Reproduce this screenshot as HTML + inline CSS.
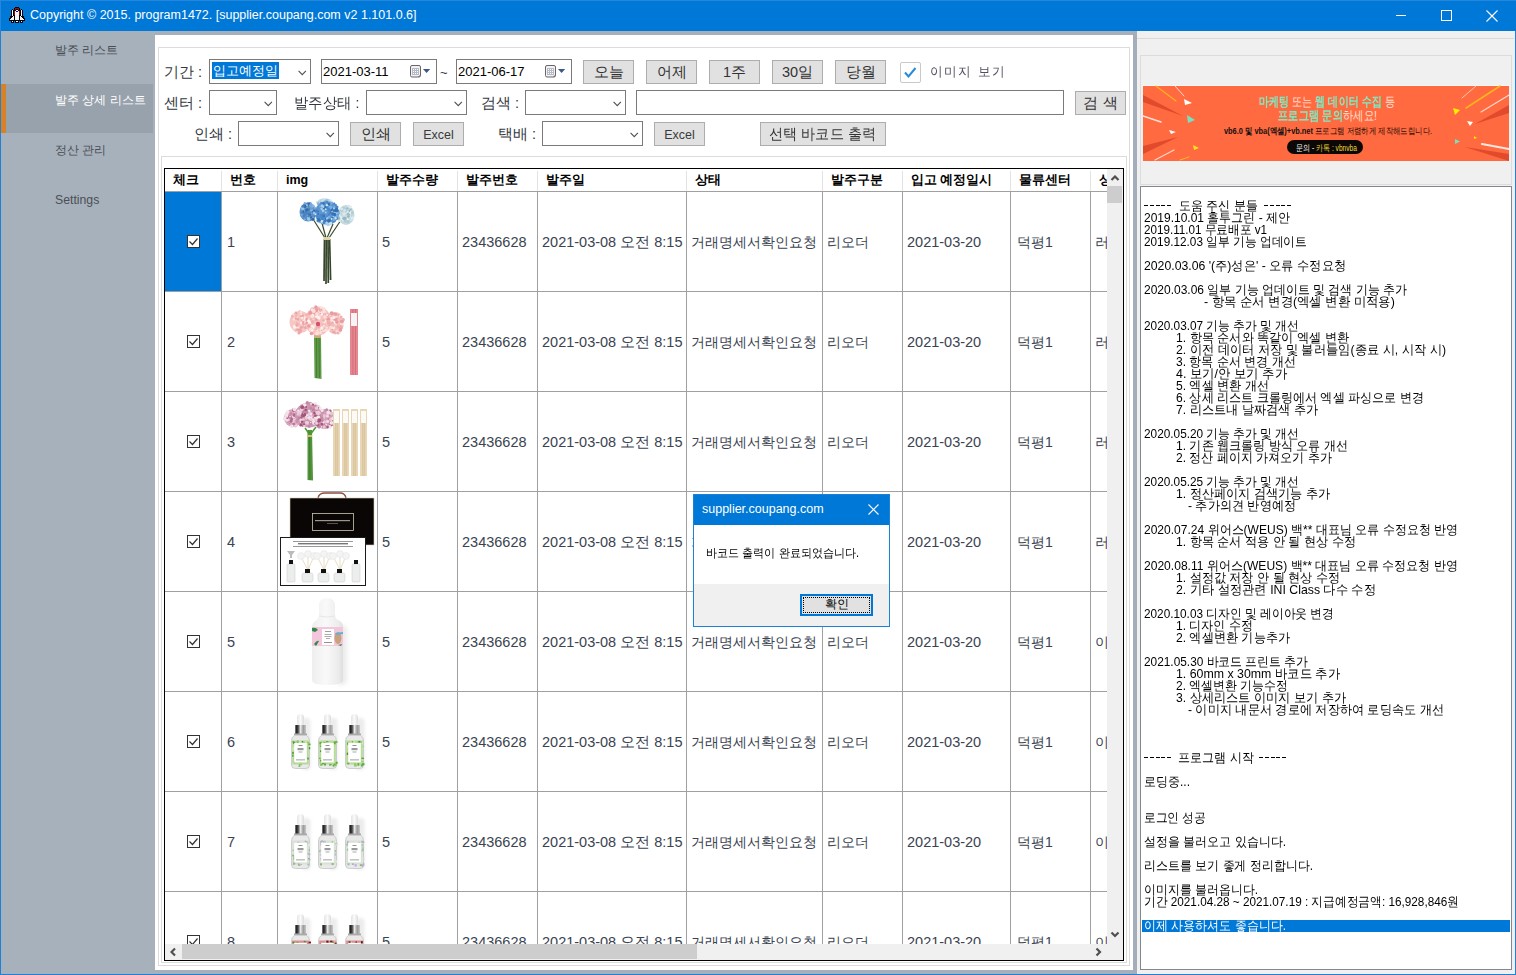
<!DOCTYPE html>
<html><head><meta charset="utf-8">
<style>
*{margin:0;padding:0;box-sizing:border-box}
html,body{width:1516px;height:975px;overflow:hidden;background:#a6b0bb;font-family:"Liberation Sans",sans-serif}
.a{position:absolute}
#title{left:0;top:0;width:1516px;height:31px;background:#0078d7}
#title .t{left:30px;top:8px;color:#fff;font-size:12.5px;white-space:nowrap}
#bl{left:0;top:31px;width:1px;height:944px;background:#1f80d6}
#br{left:1515px;top:31px;width:1px;height:944px;background:#1f80d6}
#bb{left:0;top:974px;width:1516px;height:1px;background:#1f80d6}
#side{left:1px;top:31px;width:154px;height:943px;background:#a7b1bc}
.nav{left:55px;color:#4a4f55;font-size:12.25px;white-space:nowrap}
#sel{left:1px;top:84px;width:152px;height:49px;background:#98a2ac}
#selbar{left:1px;top:84px;width:5px;height:49px;background:#d98126}
#main{left:155px;top:35px;width:978px;height:935px;background:#fff}
#split{left:1133px;top:31px;width:4px;height:943px;background:#a3aeba}
#right{left:1137px;top:31px;width:378px;height:943px;background:#f0f0f0}
.gb{border:1px solid #dcdcdc}
.lbl{color:#343840;font-size:14.5px;line-height:16px;white-space:nowrap}
.cb{background:#fff;border:1px solid #7a7a7a}
.chev{position:absolute;width:7px;height:7px;border-right:1px solid #444;border-bottom:1px solid #444;transform:rotate(45deg)}
.btn{background:#e1e1e1;border:1px solid #adadad;color:#333;font-size:14.5px;text-align:center;white-space:nowrap;line-height:22px}
.th{color:#000;font-size:12.5px;font-weight:bold;white-space:nowrap;line-height:16px}
.td{color:#3b4351;font-size:14.5px;white-space:nowrap;line-height:18px}
.log{font-size:13px;line-height:12px;white-space:pre;transform-origin:0 0}
.dlgt{color:#000;font-size:12px;line-height:14px;white-space:nowrap}
span.k{display:inline-block;transform-origin:0 50%}
.btn span.k{transform-origin:50% 50%}
.txt{color:#000;font-size:13px;white-space:nowrap}
</style></head><body>
<svg width="0" height="0" style="position:absolute"><defs><filter id="SHB" x="-60%" y="-20%" width="220%" height="140%"><feGaussianBlur stdDeviation="1.8"/></filter></defs></svg>
<!-- title bar -->
<div id="title" class="a">
  <svg class="a" style="left:8px;top:6px" width="18" height="18" viewBox="0 0 18 18" shape-rendering="crispEdges">
    <g fill="#000"><rect x="7" y="1" width="4" height="1"/><rect x="6" y="2" width="6" height="12"/><rect x="4" y="3" width="1" height="1"/><rect x="13" y="3" width="1" height="1"/><rect x="3" y="4" width="3" height="6"/><rect x="12" y="4" width="3" height="6"/><path d="M3 9H6V14H1V13Z"/><path d="M12 9H15L17 13V14H12Z"/><rect x="1" y="14" width="16" height="1"/><rect x="3" y="15" width="3" height="2"/><rect x="7" y="15" width="4" height="2"/><rect x="12" y="15" width="3" height="2"/></g>
    <g fill="#9b0a0a"><rect x="7" y="2" width="4" height="1"/><rect x="7" y="3" width="1" height="1"/><rect x="10" y="3" width="1" height="1"/><rect x="6" y="5" width="1" height="4"/><rect x="11" y="5" width="1" height="4"/></g>
    <g fill="#f4f4f4"><rect x="8" y="4" width="2" height="1"/><rect x="7" y="5" width="4" height="7"/><rect x="7" y="12" width="1" height="1"/><rect x="10" y="12" width="1" height="1"/><rect x="8" y="12" width="2" height="1" fill="#ddd"/><rect x="4" y="4" width="1" height="6"/><rect x="13" y="4" width="1" height="6"/><path d="M5 10H6V14H1.5Z"/><path d="M12 10H13L16.5 14H12Z"/><rect x="7" y="12" width="4" height="2"/><rect x="4" y="15" width="1" height="1"/><rect x="8" y="15" width="2" height="1"/><rect x="13" y="15" width="1" height="1"/></g>
    <rect x="8" y="5" width="2" height="1" fill="#0000d0"/>
  </svg>
  <div class="a t">Copyright © 2015. program1472. [supplier.coupang.com v2 1.101.0.6]</div>
  <div class="a" style="left:1396px;top:15px;width:10px;height:1px;background:#fff"></div>
  <div class="a" style="left:1441px;top:10px;width:11px;height:11px;border:1px solid #fff"></div>
  <svg class="a" style="left:1486px;top:10px" width="12" height="12" viewBox="0 0 12 12"><path d="M0.5 0.5L11.5 11.5M11.5 0.5L0.5 11.5" stroke="#fff" stroke-width="1.1"/></svg>
</div>
<div class="a" style="left:0;top:0;width:1516px;height:1px;background:#2487dc"></div><div class="a" style="left:0;top:0;width:1px;height:31px;background:#2487dc"></div><div id="bl" class="a"></div><div id="br" class="a"></div><div id="bb" class="a"></div>
<!-- sidebar -->
<div id="side" class="a"></div>
<div id="sel" class="a"></div><div id="selbar" class="a"></div>
<div class="a nav" style="top:42px"><span class="k" style="--tw:63.41px">발주 리스트</span></div>
<div class="a nav" style="top:92px;color:#fff"><span class="k" style="--tw:90.81px">발주 상세 리스트</span></div>
<div class="a nav" style="top:142px"><span class="k" style="--tw:51.41px">정산 관리</span></div>
<div class="a nav" style="top:193px">Settings</div>
<div id="main" class="a"></div>
<div id="split" class="a"></div>
<div id="right" class="a"></div>

<!-- MAIN CONTENT -->
<div id="content">
<div class="a gb" style="left:158px;top:47px;width:972px;height:919px"></div>
<div class="a gb" style="left:161px;top:156px;width:966px;height:807px"></div>
<div class="a lbl" style="left:164px;top:64px;"><span class="k" style="--tw:38.06px">기간 :</span></div>
<div class="a cb" style="left:209px;top:59px;width:102px;height:25px"><div class="a" style="left:2px;top:2px;width:67px;height:17px;background:#0078d7;color:#fff;font-size:13px;line-height:17px;padding-left:1px"><span class="k" style="--tw:65.00px">입고예정일</span></div><svg class="a" style="left:88px;top:9.5px" width="9" height="6" viewBox="0 0 9 6"><path d="M0.6 0.8L4.25 4.6L7.9 0.8" fill="none" stroke="#505050" stroke-width="1.1"/></svg></div>
<div class="a cb" style="left:321px;top:59px;width:116px;height:25px"><div class="a txt" style="left:1px;top:4px">2021-03-11</div><svg class="a" style="left:87px;top:5px" width="24" height="14" viewBox="0 0 24 14"><rect x="1.5" y="0.5" width="10" height="11.5" rx="1.5" fill="#eef2fa" stroke="#6f6462" stroke-width="1"/><rect x="3" y="3" width="7" height="7" fill="#b6bac4" shape-rendering="crispEdges"/><g fill="#fff" shape-rendering="crispEdges"><rect x="4" y="4" width="1" height="1"/><rect x="6" y="4" width="1" height="1"/><rect x="8" y="4" width="1" height="1"/><rect x="4" y="6" width="1" height="1"/><rect x="6" y="6" width="1" height="1"/><rect x="8" y="6" width="1" height="1"/><rect x="4" y="8" width="1" height="1"/><rect x="6" y="8" width="1" height="1"/><rect x="8" y="8" width="1" height="1"/></g><path d="M9 12L11.5 9.5V10.5L10 12Z" fill="#6f6462"/><path d="M14 3.9H21.2L17.6 8Z" fill="#3b5888"/></svg></div>
<div class="a cb" style="left:456px;top:59px;width:116px;height:25px"><div class="a txt" style="left:1px;top:4px">2021-06-17</div><svg class="a" style="left:87px;top:5px" width="24" height="14" viewBox="0 0 24 14"><rect x="1.5" y="0.5" width="10" height="11.5" rx="1.5" fill="#eef2fa" stroke="#6f6462" stroke-width="1"/><rect x="3" y="3" width="7" height="7" fill="#b6bac4" shape-rendering="crispEdges"/><g fill="#fff" shape-rendering="crispEdges"><rect x="4" y="4" width="1" height="1"/><rect x="6" y="4" width="1" height="1"/><rect x="8" y="4" width="1" height="1"/><rect x="4" y="6" width="1" height="1"/><rect x="6" y="6" width="1" height="1"/><rect x="8" y="6" width="1" height="1"/><rect x="4" y="8" width="1" height="1"/><rect x="6" y="8" width="1" height="1"/><rect x="8" y="8" width="1" height="1"/></g><path d="M9 12L11.5 9.5V10.5L10 12Z" fill="#6f6462"/><path d="M14 3.9H21.2L17.6 8Z" fill="#3b5888"/></svg></div>
<div class="a lbl" style="left:440px;top:65px;font-size:13px">~</div>
<div class="a btn" style="left:583px;top:60px;width:51px;height:24px"><span class="k" style="--tw:30.00px">오늘</span></div>
<div class="a btn" style="left:646px;top:60px;width:51px;height:24px"><span class="k" style="--tw:30.00px">어제</span></div>
<div class="a btn" style="left:709px;top:60px;width:51px;height:24px"><span class="k" style="--tw:23.08px">1주</span></div>
<div class="a btn" style="left:772px;top:60px;width:51px;height:24px"><span class="k" style="--tw:31.14px">30일</span></div>
<div class="a btn" style="left:835px;top:60px;width:51px;height:24px"><span class="k" style="--tw:30.00px">당월</span></div>
<div class="a" style="left:900px;top:62px;width:21px;height:21px;border:1px solid #c9c9c9;border-radius:2px;background:#fff"></div>
<svg class="a" style="left:900px;top:62px" width="21" height="21" viewBox="0 0 21 21"><path d="M5 10.5l3.5 4L15.5 6" fill="none" stroke="#2a8ad6" stroke-width="2"/></svg>
<div class="a lbl" style="left:930px;top:64px;letter-spacing:1.6px;color:#505060;font-size:13px"><span class="k" style="--tw:76px">이미지 보기</span></div>
<div class="a lbl" style="left:164px;top:95px;"><span class="k" style="--tw:38.06px">센터 :</span></div>
<div class="a cb" style="left:209px;top:90px;width:68px;height:25px"><svg class="a" style="left:54px;top:9.5px" width="9" height="6" viewBox="0 0 9 6"><path d="M0.6 0.8L4.25 4.6L7.9 0.8" fill="none" stroke="#505050" stroke-width="1.1"/></svg></div>
<div class="a lbl" style="left:294px;top:95px;"><span class="k" style="--tw:65.40px">발주상태 :</span></div>
<div class="a cb" style="left:366px;top:90px;width:101px;height:25px"><svg class="a" style="left:87px;top:9.5px" width="9" height="6" viewBox="0 0 9 6"><path d="M0.6 0.8L4.25 4.6L7.9 0.8" fill="none" stroke="#505050" stroke-width="1.1"/></svg></div>
<div class="a lbl" style="left:481px;top:95px;"><span class="k" style="--tw:38.06px">검색 :</span></div>
<div class="a cb" style="left:525px;top:90px;width:101px;height:25px"><svg class="a" style="left:87px;top:9.5px" width="9" height="6" viewBox="0 0 9 6"><path d="M0.6 0.8L4.25 4.6L7.9 0.8" fill="none" stroke="#505050" stroke-width="1.1"/></svg></div>
<div class="a cb" style="left:636px;top:90px;width:428px;height:25px"></div>
<div class="a btn" style="left:1075px;top:91px;width:51px;height:24px"><span class="k" style="--tw:34.03px">검 색</span></div>
<div class="a lbl" style="left:194px;top:126px;"><span class="k" style="--tw:38.06px">인쇄 :</span></div>
<div class="a cb" style="left:238px;top:121px;width:101px;height:25px"><svg class="a" style="left:87px;top:9.5px" width="9" height="6" viewBox="0 0 9 6"><path d="M0.6 0.8L4.25 4.6L7.9 0.8" fill="none" stroke="#505050" stroke-width="1.1"/></svg></div>
<div class="a btn" style="left:350px;top:122px;width:51px;height:24px"><span class="k" style="--tw:30.00px">인쇄</span></div>
<div class="a btn" style="left:413px;top:122px;width:51px;height:24px;font-size:12.5px;color:#3a3a3a;line-height:24px">Excel</div>
<div class="a lbl" style="left:498px;top:126px;"><span class="k" style="--tw:38.06px">택배 :</span></div>
<div class="a cb" style="left:542px;top:121px;width:101px;height:25px"><svg class="a" style="left:87px;top:9.5px" width="9" height="6" viewBox="0 0 9 6"><path d="M0.6 0.8L4.25 4.6L7.9 0.8" fill="none" stroke="#505050" stroke-width="1.1"/></svg></div>
<div class="a btn" style="left:654px;top:122px;width:51px;height:24px;font-size:12.5px;color:#3a3a3a;line-height:24px">Excel</div>
<div class="a btn" style="left:760px;top:122px;width:126px;height:24px"><span class="k" style="--tw:106.48px">선택 바코드 출력</span></div>
<div class="a" style="left:164px;top:168px;width:960px;height:793px;border:1px solid #000;background:#fff"></div>
<div class="a" style="left:165px;top:169px;width:942px;height:775px;overflow:hidden">
<div class="a" style="left:0;top:22px;width:942px;height:1px;background:#a0a0a0"></div>
<div class="a" style="left:56px;top:2px;width:1px;height:20px;background:#e3e3e3"></div>
<div class="a" style="left:112px;top:2px;width:1px;height:20px;background:#e3e3e3"></div>
<div class="a" style="left:212px;top:2px;width:1px;height:20px;background:#e3e3e3"></div>
<div class="a" style="left:292px;top:2px;width:1px;height:20px;background:#e3e3e3"></div>
<div class="a" style="left:372px;top:2px;width:1px;height:20px;background:#e3e3e3"></div>
<div class="a" style="left:521px;top:2px;width:1px;height:20px;background:#e3e3e3"></div>
<div class="a" style="left:657px;top:2px;width:1px;height:20px;background:#e3e3e3"></div>
<div class="a" style="left:737px;top:2px;width:1px;height:20px;background:#e3e3e3"></div>
<div class="a" style="left:845px;top:2px;width:1px;height:20px;background:#e3e3e3"></div>
<div class="a" style="left:925px;top:2px;width:1px;height:20px;background:#e3e3e3"></div>
<div class="a th" style="left:8px;top:3px"><span class="k" style="--tw:26.00px">체크</span></div>
<div class="a th" style="left:65px;top:3px"><span class="k" style="--tw:26.00px">번호</span></div>
<div class="a th" style="left:121px;top:3px">img</div>
<div class="a th" style="left:221px;top:3px"><span class="k" style="--tw:52.00px">발주수량</span></div>
<div class="a th" style="left:301px;top:3px"><span class="k" style="--tw:52.00px">발주번호</span></div>
<div class="a th" style="left:381px;top:3px"><span class="k" style="--tw:39.00px">발주일</span></div>
<div class="a th" style="left:530px;top:3px"><span class="k" style="--tw:26.00px">상태</span></div>
<div class="a th" style="left:666px;top:3px"><span class="k" style="--tw:52.00px">발주구분</span></div>
<div class="a th" style="left:746px;top:3px"><span class="k" style="--tw:81.48px">입고 예정일시</span></div>
<div class="a th" style="left:854px;top:3px"><span class="k" style="--tw:52.00px">물류센터</span></div>
<div class="a th" style="left:934px;top:3px"><span class="k" style="--tw:26.00px">상태</span></div>
<div class="a" style="left:0;top:23px;width:56px;height:99px;background:#0078d7"></div>
<div class="a" style="left:0;top:122px;width:942px;height:1px;background:#a0a0a0"></div>
<div class="a" style="left:0;top:222px;width:942px;height:1px;background:#a0a0a0"></div>
<div class="a" style="left:0;top:322px;width:942px;height:1px;background:#a0a0a0"></div>
<div class="a" style="left:0;top:422px;width:942px;height:1px;background:#a0a0a0"></div>
<div class="a" style="left:0;top:522px;width:942px;height:1px;background:#a0a0a0"></div>
<div class="a" style="left:0;top:622px;width:942px;height:1px;background:#a0a0a0"></div>
<div class="a" style="left:0;top:722px;width:942px;height:1px;background:#a0a0a0"></div>
<div class="a" style="left:0;top:822px;width:942px;height:1px;background:#a0a0a0"></div>
<div class="a" style="left:56px;top:23px;width:1px;height:760px;background:#a0a0a0"></div>
<div class="a" style="left:112px;top:23px;width:1px;height:760px;background:#a0a0a0"></div>
<div class="a" style="left:212px;top:23px;width:1px;height:760px;background:#a0a0a0"></div>
<div class="a" style="left:292px;top:23px;width:1px;height:760px;background:#a0a0a0"></div>
<div class="a" style="left:372px;top:23px;width:1px;height:760px;background:#a0a0a0"></div>
<div class="a" style="left:521px;top:23px;width:1px;height:760px;background:#a0a0a0"></div>
<div class="a" style="left:657px;top:23px;width:1px;height:760px;background:#a0a0a0"></div>
<div class="a" style="left:737px;top:23px;width:1px;height:760px;background:#a0a0a0"></div>
<div class="a" style="left:845px;top:23px;width:1px;height:760px;background:#a0a0a0"></div>
<div class="a" style="left:925px;top:23px;width:1px;height:760px;background:#a0a0a0"></div>
<svg class="a" style="left:22px;top:66px" width="13" height="13" viewBox="0 0 13 13"><rect x="0.5" y="0.5" width="12" height="12" fill="#fff" stroke="#333"/><path d="M2.5 6.5l3 3 5-6" fill="none" stroke="#333" stroke-width="1.2"/></svg>
<div class="a td" style="left:62px;top:64px">1</div>
<svg class="a" style="left:113px;top:23px" width="99" height="99" viewBox="0 0 99 99"><defs><filter id="FB0" x="-10%" y="-10%" width="120%" height="120%"><feGaussianBlur stdDeviation="0.45"/></filter></defs><g filter="url(#FB0)">
<g stroke="#3a4a2c" stroke-width="1.2" fill="none"><path d="M35 27L47 46"/><path d="M44 31L48 46"/><path d="M55 32L49 46"/><path d="M63 28L51 46"/></g>
<g stroke="#36452a" stroke-width="1.7" fill="none"><path d="M46.5 47L46 89"/><path d="M48.2 47L48 92"/><path d="M50 47L50.3 91"/><path d="M51.6 47L52.6 88"/></g>
<rect x="45.5" y="45" width="6.5" height="3" fill="#ddd3a8"/>
<ellipse cx="68" cy="23" rx="8.5" ry="10" fill="#c4dade"/><circle cx="66.5" cy="26.5" r="1.6" fill="#b0ccd4"/><circle cx="69.1" cy="20.2" r="1.5" fill="#d8e8ec"/><circle cx="73.4" cy="24.5" r="0.9" fill="#b0ccd4"/><circle cx="66.0" cy="22.2" r="1.5" fill="#d8e8ec"/><circle cx="63.6" cy="17.4" r="0.9" fill="#e8f2f4"/><circle cx="71.8" cy="24.4" r="1.5" fill="#d8e8ec"/><circle cx="67.2" cy="26.7" r="0.9" fill="#9ab8c4"/><circle cx="61.5" cy="19.9" r="0.9" fill="#d8e8ec"/><circle cx="63.6" cy="28.3" r="0.9" fill="#b0ccd4"/><circle cx="63.6" cy="18.2" r="1.4" fill="#9ab8c4"/><circle cx="60.0" cy="25.1" r="1.2" fill="#d8e8ec"/><circle cx="70.0" cy="15.0" r="1.1" fill="#9ab8c4"/><circle cx="60.1" cy="21.5" r="1.7" fill="#9ab8c4"/><circle cx="66.2" cy="21.3" r="1.4" fill="#d8e8ec"/><circle cx="68.1" cy="19.1" r="1.4" fill="#b0ccd4"/><circle cx="70.3" cy="22.3" r="1.5" fill="#9ab8c4"/><circle cx="65.3" cy="28.0" r="1.4" fill="#e8f2f4"/><circle cx="70.4" cy="24.3" r="1.1" fill="#b0ccd4"/><circle cx="74.6" cy="26.1" r="1.6" fill="#e8f2f4"/><circle cx="66.9" cy="29.1" r="1.6" fill="#b0ccd4"/><circle cx="72.7" cy="20.8" r="1.5" fill="#e8f2f4"/><circle cx="74.9" cy="26.2" r="1.0" fill="#d8e8ec"/><circle cx="61.5" cy="28.7" r="1.4" fill="#d8e8ec"/><circle cx="62.0" cy="25.3" r="1.9" fill="#e8f2f4"/><circle cx="70.9" cy="19.0" r="1.3" fill="#9ab8c4"/><circle cx="65.8" cy="17.4" r="1.1" fill="#b0ccd4"/><circle cx="69.8" cy="27.3" r="1.1" fill="#e8f2f4"/><circle cx="69.8" cy="19.3" r="1.1" fill="#d8e8ec"/><circle cx="63.5" cy="26.0" r="1.5" fill="#d8e8ec"/><circle cx="65.8" cy="16.3" r="1.5" fill="#b0ccd4"/><circle cx="60.4" cy="25.5" r="1.9" fill="#e8f2f4"/><circle cx="63.7" cy="26.8" r="1.4" fill="#e8f2f4"/><circle cx="70.0" cy="24.0" r="1.1" fill="#d8e8ec"/><circle cx="73.1" cy="27.9" r="0.9" fill="#d8e8ec"/><circle cx="59.9" cy="20.8" r="1.5" fill="#b0ccd4"/><circle cx="72.7" cy="17.4" r="1.0" fill="#9ab8c4"/><circle cx="74.3" cy="20.9" r="1.4" fill="#b0ccd4"/><circle cx="72.9" cy="14.9" r="1.4" fill="#e8f2f4"/><circle cx="66.8" cy="26.5" r="1.7" fill="#9ab8c4"/><circle cx="61.0" cy="24.1" r="1.4" fill="#d8e8ec"/><circle cx="73.9" cy="20.8" r="1.0" fill="#b0ccd4"/><circle cx="68.2" cy="17.5" r="1.6" fill="#b0ccd4"/><circle cx="66.6" cy="18.2" r="1.2" fill="#d8e8ec"/><circle cx="65.5" cy="26.7" r="1.4" fill="#9ab8c4"/><circle cx="63.6" cy="17.1" r="1.7" fill="#d8e8ec"/><circle cx="70.7" cy="14.5" r="1.7" fill="#d8e8ec"/><circle cx="69.8" cy="29.7" r="1.7" fill="#b0ccd4"/><circle cx="69.5" cy="16.3" r="1.0" fill="#9ab8c4"/><circle cx="60.2" cy="26.2" r="2.0" fill="#9ab8c4"/><circle cx="70.4" cy="24.5" r="1.4" fill="#9ab8c4"/><ellipse cx="47" cy="11" rx="8" ry="4.5" fill="#a9c9dc"/><circle cx="48.8" cy="14.4" r="1.9" fill="#c6dde8"/><circle cx="40.6" cy="11.5" r="1.8" fill="#c6dde8"/><circle cx="48.4" cy="9.7" r="1.3" fill="#e0eef2"/><circle cx="47.0" cy="7.9" r="1.0" fill="#e0eef2"/><circle cx="43.5" cy="14.5" r="2.0" fill="#8fb6d2"/><circle cx="40.3" cy="11.9" r="0.9" fill="#c6dde8"/><circle cx="48.4" cy="12.4" r="1.0" fill="#8fb6d2"/><circle cx="48.1" cy="9.4" r="1.8" fill="#8fb6d2"/><circle cx="44.4" cy="8.8" r="1.5" fill="#c6dde8"/><circle cx="54.1" cy="11.5" r="1.7" fill="#c6dde8"/><circle cx="39.4" cy="10.3" r="1.3" fill="#c6dde8"/><circle cx="48.7" cy="9.2" r="1.1" fill="#8fb6d2"/><circle cx="40.0" cy="11.0" r="1.2" fill="#e0eef2"/><circle cx="44.5" cy="11.8" r="1.9" fill="#8fb6d2"/><circle cx="52.2" cy="8.8" r="1.8" fill="#e0eef2"/><circle cx="40.3" cy="13.1" r="1.4" fill="#e0eef2"/><circle cx="50.3" cy="13.6" r="1.8" fill="#c6dde8"/><circle cx="41.5" cy="8.5" r="1.0" fill="#c6dde8"/><circle cx="40.3" cy="11.6" r="1.5" fill="#8fb6d2"/><circle cx="44.6" cy="8.0" r="1.4" fill="#c6dde8"/><ellipse cx="30" cy="20" rx="8.5" ry="9.5" fill="#5a93cb"/><circle cx="31.5" cy="18.5" r="1.0" fill="#4a82c0"/><circle cx="30.8" cy="13.3" r="1.5" fill="#4a82c0"/><circle cx="23.8" cy="22.6" r="1.4" fill="#77acd9"/><circle cx="28.0" cy="14.0" r="1.4" fill="#9cc4e4"/><circle cx="25.8" cy="19.8" r="1.4" fill="#3468a8"/><circle cx="37.1" cy="15.8" r="1.0" fill="#9cc4e4"/><circle cx="31.9" cy="22.5" r="1.3" fill="#4a82c0"/><circle cx="27.4" cy="14.5" r="1.1" fill="#3468a8"/><circle cx="31.7" cy="11.2" r="1.0" fill="#3468a8"/><circle cx="35.0" cy="27.0" r="2.0" fill="#77acd9"/><circle cx="29.9" cy="17.1" r="1.9" fill="#77acd9"/><circle cx="37.7" cy="19.4" r="1.0" fill="#9cc4e4"/><circle cx="35.4" cy="19.8" r="1.3" fill="#3468a8"/><circle cx="27.0" cy="27.3" r="0.8" fill="#9cc4e4"/><circle cx="28.9" cy="20.5" r="1.2" fill="#3468a8"/><circle cx="27.9" cy="19.8" r="2.0" fill="#77acd9"/><circle cx="32.7" cy="19.5" r="1.1" fill="#4a82c0"/><circle cx="33.0" cy="17.7" r="1.7" fill="#9cc4e4"/><circle cx="34.1" cy="13.7" r="1.9" fill="#9cc4e4"/><circle cx="34.8" cy="27.3" r="1.5" fill="#3468a8"/><circle cx="31.7" cy="21.2" r="1.6" fill="#9cc4e4"/><circle cx="33.5" cy="17.0" r="0.8" fill="#4a82c0"/><circle cx="30.8" cy="17.4" r="1.8" fill="#4a82c0"/><circle cx="29.7" cy="23.3" r="0.8" fill="#9cc4e4"/><circle cx="33.9" cy="17.8" r="1.0" fill="#77acd9"/><circle cx="37.7" cy="16.5" r="1.1" fill="#77acd9"/><circle cx="31.4" cy="25.1" r="1.2" fill="#77acd9"/><circle cx="28.5" cy="26.5" r="1.0" fill="#3468a8"/><circle cx="32.8" cy="11.1" r="0.8" fill="#4a82c0"/><circle cx="29.3" cy="13.0" r="1.0" fill="#9cc4e4"/><circle cx="30.2" cy="26.3" r="1.6" fill="#9cc4e4"/><circle cx="26.5" cy="14.2" r="1.9" fill="#3468a8"/><circle cx="26.8" cy="11.3" r="1.2" fill="#77acd9"/><circle cx="25.9" cy="23.2" r="0.9" fill="#77acd9"/><circle cx="36.7" cy="20.7" r="1.9" fill="#9cc4e4"/><circle cx="31.3" cy="22.4" r="1.8" fill="#3468a8"/><circle cx="24.2" cy="15.4" r="0.9" fill="#77acd9"/><circle cx="33.1" cy="25.3" r="1.1" fill="#3468a8"/><circle cx="36.2" cy="18.8" r="1.1" fill="#3468a8"/><circle cx="30.7" cy="24.0" r="1.2" fill="#4a82c0"/><circle cx="24.0" cy="21.1" r="1.0" fill="#4a82c0"/><circle cx="36.5" cy="24.6" r="1.0" fill="#4a82c0"/><circle cx="26.3" cy="23.2" r="1.6" fill="#4a82c0"/><circle cx="24.7" cy="16.5" r="1.7" fill="#9cc4e4"/><circle cx="30.6" cy="12.0" r="1.4" fill="#3468a8"/><circle cx="28.9" cy="12.5" r="0.9" fill="#9cc4e4"/><circle cx="29.2" cy="11.5" r="1.0" fill="#4a82c0"/><circle cx="33.0" cy="13.6" r="1.9" fill="#77acd9"/><circle cx="31.5" cy="21.0" r="1.6" fill="#4a82c0"/><circle cx="25.9" cy="24.5" r="0.9" fill="#4a82c0"/><circle cx="25.1" cy="14.4" r="1.4" fill="#4a82c0"/><circle cx="27.8" cy="20.7" r="1.9" fill="#4a82c0"/><circle cx="28.8" cy="17.9" r="1.7" fill="#3468a8"/><circle cx="32.8" cy="11.9" r="1.1" fill="#77acd9"/><circle cx="30.8" cy="27.6" r="1.4" fill="#9cc4e4"/><ellipse cx="49" cy="21" rx="12" ry="12" fill="#5b96d0"/><circle cx="59.1" cy="26.3" r="1.1" fill="#4a86c8"/><circle cx="41.9" cy="14.5" r="0.9" fill="#76afe0"/><circle cx="44.2" cy="29.4" r="1.6" fill="#cfe6f2"/><circle cx="47.8" cy="20.4" r="0.9" fill="#a8d0ec"/><circle cx="52.7" cy="20.3" r="1.1" fill="#3470b4"/><circle cx="46.8" cy="29.3" r="1.4" fill="#3470b4"/><circle cx="50.3" cy="9.1" r="1.5" fill="#a8d0ec"/><circle cx="60.5" cy="19.4" r="0.8" fill="#3470b4"/><circle cx="56.6" cy="24.9" r="2.0" fill="#a8d0ec"/><circle cx="40.3" cy="28.5" r="1.9" fill="#4a86c8"/><circle cx="45.1" cy="18.8" r="1.4" fill="#a8d0ec"/><circle cx="56.3" cy="29.0" r="1.4" fill="#4a86c8"/><circle cx="47.3" cy="15.5" r="1.9" fill="#3470b4"/><circle cx="45.2" cy="24.0" r="1.9" fill="#3470b4"/><circle cx="40.5" cy="26.7" r="1.3" fill="#3470b4"/><circle cx="44.6" cy="31.1" r="0.8" fill="#a8d0ec"/><circle cx="51.2" cy="17.5" r="1.9" fill="#4a86c8"/><circle cx="54.3" cy="17.3" r="1.2" fill="#3470b4"/><circle cx="40.4" cy="28.1" r="0.9" fill="#3470b4"/><circle cx="49.4" cy="9.9" r="1.1" fill="#4a86c8"/><circle cx="52.3" cy="15.5" r="1.9" fill="#76afe0"/><circle cx="56.8" cy="19.6" r="1.2" fill="#a8d0ec"/><circle cx="50.7" cy="13.3" r="0.8" fill="#3470b4"/><circle cx="59.0" cy="15.0" r="1.5" fill="#4a86c8"/><circle cx="58.8" cy="24.1" r="1.3" fill="#76afe0"/><circle cx="45.0" cy="15.9" r="0.9" fill="#cfe6f2"/><circle cx="54.7" cy="26.9" r="1.2" fill="#a8d0ec"/><circle cx="48.6" cy="31.3" r="1.6" fill="#3470b4"/><circle cx="45.3" cy="15.5" r="1.5" fill="#3470b4"/><circle cx="56.0" cy="27.6" r="0.9" fill="#cfe6f2"/><circle cx="56.0" cy="16.3" r="1.1" fill="#a8d0ec"/><circle cx="57.0" cy="20.8" r="1.0" fill="#76afe0"/><circle cx="49.2" cy="26.0" r="1.5" fill="#a8d0ec"/><circle cx="49.4" cy="27.1" r="1.5" fill="#4a86c8"/><circle cx="49.0" cy="13.3" r="1.3" fill="#cfe6f2"/><circle cx="50.6" cy="27.0" r="1.7" fill="#3470b4"/><circle cx="47.0" cy="32.6" r="1.0" fill="#cfe6f2"/><circle cx="38.5" cy="19.1" r="1.8" fill="#4a86c8"/><circle cx="48.2" cy="26.9" r="1.3" fill="#3470b4"/><circle cx="42.9" cy="23.8" r="1.8" fill="#4a86c8"/><circle cx="54.5" cy="26.6" r="1.7" fill="#3470b4"/><circle cx="57.2" cy="19.3" r="0.9" fill="#cfe6f2"/><circle cx="56.3" cy="11.7" r="1.1" fill="#4a86c8"/><circle cx="49.8" cy="25.6" r="2.0" fill="#4a86c8"/><circle cx="58.5" cy="17.3" r="1.6" fill="#3470b4"/><circle cx="58.1" cy="26.4" r="0.8" fill="#76afe0"/><circle cx="50.3" cy="32.4" r="1.6" fill="#a8d0ec"/><circle cx="58.2" cy="18.8" r="1.4" fill="#3470b4"/><circle cx="47.7" cy="17.2" r="0.9" fill="#cfe6f2"/><circle cx="53.9" cy="19.2" r="1.1" fill="#cfe6f2"/><circle cx="57.8" cy="21.1" r="2.0" fill="#a8d0ec"/><circle cx="58.3" cy="18.5" r="1.9" fill="#3470b4"/><circle cx="40.2" cy="19.5" r="0.8" fill="#3470b4"/><circle cx="47.1" cy="14.6" r="0.8" fill="#3470b4"/><circle cx="56.2" cy="14.6" r="0.9" fill="#76afe0"/><circle cx="43.3" cy="11.0" r="1.1" fill="#4a86c8"/><circle cx="45.6" cy="11.4" r="1.2" fill="#3470b4"/><circle cx="52.4" cy="31.1" r="1.7" fill="#cfe6f2"/><circle cx="56.7" cy="24.5" r="1.0" fill="#76afe0"/><circle cx="49.7" cy="26.6" r="1.7" fill="#a8d0ec"/><circle cx="56.3" cy="27.0" r="1.5" fill="#76afe0"/><circle cx="37.6" cy="22.1" r="0.9" fill="#cfe6f2"/><circle cx="53.6" cy="27.0" r="1.1" fill="#cfe6f2"/><circle cx="50.7" cy="23.1" r="0.9" fill="#3470b4"/><circle cx="39.4" cy="24.2" r="1.2" fill="#4a86c8"/><circle cx="60.6" cy="20.8" r="1.2" fill="#76afe0"/><circle cx="44.0" cy="13.9" r="1.4" fill="#a8d0ec"/><circle cx="45.2" cy="14.7" r="1.2" fill="#a8d0ec"/><circle cx="45.3" cy="22.4" r="0.9" fill="#4a86c8"/><circle cx="42.0" cy="30.4" r="0.9" fill="#76afe0"/><circle cx="41.3" cy="28.2" r="1.2" fill="#3470b4"/><circle cx="57.6" cy="26.3" r="1.0" fill="#cfe6f2"/><circle cx="53.6" cy="18.4" r="1.2" fill="#3470b4"/><circle cx="56.6" cy="22.5" r="1.8" fill="#3470b4"/><circle cx="51.2" cy="21.6" r="0.9" fill="#4a86c8"/><circle cx="48.5" cy="31.4" r="1.9" fill="#a8d0ec"/><circle cx="44.5" cy="26.3" r="1.9" fill="#4a86c8"/><circle cx="48.2" cy="31.1" r="1.2" fill="#a8d0ec"/><circle cx="46.0" cy="30.7" r="1.5" fill="#4a86c8"/><circle cx="54.7" cy="21.9" r="1.4" fill="#3470b4"/><circle cx="56.1" cy="18.9" r="1.1" fill="#3470b4"/><circle cx="50.7" cy="17.0" r="1.4" fill="#4a86c8"/><circle cx="52.3" cy="11.2" r="1.8" fill="#76afe0"/><circle cx="43.6" cy="16.7" r="1.2" fill="#a8d0ec"/><circle cx="51.0" cy="11.9" r="1.4" fill="#3470b4"/><circle cx="49.1" cy="15.0" r="0.9" fill="#4a86c8"/><circle cx="40.2" cy="22.0" r="1.0" fill="#3470b4"/><circle cx="57.9" cy="13.0" r="1.1" fill="#4a86c8"/><circle cx="51.0" cy="28.5" r="2.0" fill="#3470b4"/><circle cx="51.0" cy="24.9" r="1.4" fill="#76afe0"/></g></svg>
<div class="a td" style="left:217px;top:64px">5</div>
<div class="a td" style="left:297px;top:64px">23436628</div>
<div class="a td" style="left:377px;top:64px"><span class="k" style="--tw:140.45px">2021-03-08 오전 8:15</span></div>
<div class="a td" style="left:526px;top:64px;font-size:14px"><span class="k" style="--tw:126.00px">거래명세서확인요청</span></div>
<div class="a td" style="left:662px;top:64px;font-size:14px"><span class="k" style="--tw:42.00px">리오더</span></div>
<div class="a td" style="left:742px;top:64px">2021-03-20</div>
<div class="a td" style="left:852px;top:64px;font-size:14px"><span class="k" style="--tw:35.80px">덕평1</span></div>
<div class="a td" style="left:930px;top:64px;font-size:14px"><span class="k" style="--tw:14.00px">러</span></div>
<svg class="a" style="left:22px;top:166px" width="13" height="13" viewBox="0 0 13 13"><rect x="0.5" y="0.5" width="12" height="12" fill="#fff" stroke="#333"/><path d="M2.5 6.5l3 3 5-6" fill="none" stroke="#333" stroke-width="1.2"/></svg>
<div class="a td" style="left:62px;top:164px">2</div>
<svg class="a" style="left:113px;top:123px" width="99" height="99" viewBox="0 0 99 99"><defs><filter id="FB1" x="-10%" y="-10%" width="120%" height="120%"><feGaussianBlur stdDeviation="0.45"/></filter></defs><g filter="url(#FB1)">
<path d="M36 44L36.5 86L43.5 87L43 44Z" fill="#5f9a46"/><path d="M38.5 45L38.5 86M41 45L41.5 86" stroke="#437a33" stroke-width="0.8"/>
<rect x="36" y="43" width="7" height="3" fill="#c9b07a"/>
<ellipse cx="22" cy="30" rx="10.5" ry="11" fill="#f6c8c4"/><circle cx="21.9" cy="19.9" r="1.6" fill="#f2b4b2"/><circle cx="23.1" cy="24.1" r="1.1" fill="#eba4a8"/><circle cx="15.7" cy="36.8" r="1.0" fill="#fde2de"/><circle cx="24.0" cy="34.9" r="1.1" fill="#fde2de"/><circle cx="19.0" cy="36.1" r="2.0" fill="#fde2de"/><circle cx="20.0" cy="27.2" r="1.4" fill="#f2b4b2"/><circle cx="27.8" cy="34.5" r="1.8" fill="#fff0ec"/><circle cx="23.8" cy="28.9" r="1.2" fill="#f2b4b2"/><circle cx="29.7" cy="32.7" r="1.8" fill="#fde2de"/><circle cx="27.8" cy="27.1" r="1.8" fill="#fff0ec"/><circle cx="14.6" cy="24.2" r="1.6" fill="#f2b4b2"/><circle cx="28.4" cy="35.2" r="1.5" fill="#fde2de"/><circle cx="28.0" cy="31.5" r="0.9" fill="#eba4a8"/><circle cx="30.7" cy="32.2" r="1.9" fill="#f2b4b2"/><circle cx="24.8" cy="23.6" r="1.2" fill="#eba4a8"/><circle cx="23.6" cy="30.9" r="1.4" fill="#fff0ec"/><circle cx="25.1" cy="31.4" r="1.3" fill="#fde2de"/><circle cx="20.0" cy="27.5" r="1.0" fill="#eba4a8"/><circle cx="17.3" cy="33.1" r="1.2" fill="#f2b4b2"/><circle cx="19.0" cy="37.7" r="1.2" fill="#fff0ec"/><circle cx="31.1" cy="31.1" r="1.8" fill="#fde2de"/><circle cx="16.8" cy="34.4" r="1.9" fill="#fff0ec"/><circle cx="27.6" cy="25.9" r="1.8" fill="#fff0ec"/><circle cx="16.4" cy="26.9" r="1.7" fill="#fde2de"/><circle cx="29.8" cy="30.8" r="1.6" fill="#fff0ec"/><circle cx="29.0" cy="34.6" r="1.2" fill="#fde2de"/><circle cx="25.4" cy="34.6" r="1.4" fill="#f2b4b2"/><circle cx="27.7" cy="34.9" r="1.8" fill="#fde2de"/><circle cx="18.9" cy="39.5" r="0.9" fill="#fff0ec"/><circle cx="18.8" cy="37.9" r="1.6" fill="#f2b4b2"/><circle cx="28.8" cy="25.1" r="1.8" fill="#fde2de"/><circle cx="15.8" cy="22.1" r="1.5" fill="#fde2de"/><circle cx="24.1" cy="25.9" r="1.1" fill="#fff0ec"/><circle cx="25.8" cy="28.4" r="1.2" fill="#fde2de"/><circle cx="22.2" cy="39.4" r="1.9" fill="#f2b4b2"/><circle cx="29.2" cy="23.3" r="1.6" fill="#eba4a8"/><circle cx="28.0" cy="35.7" r="1.5" fill="#eba4a8"/><circle cx="18.5" cy="25.1" r="1.1" fill="#fff0ec"/><circle cx="18.2" cy="23.8" r="1.3" fill="#f2b4b2"/><circle cx="32.4" cy="30.2" r="1.4" fill="#fff0ec"/><circle cx="22.8" cy="20.3" r="1.3" fill="#fde2de"/><circle cx="24.5" cy="23.5" r="0.9" fill="#eba4a8"/><circle cx="19.1" cy="31.4" r="1.3" fill="#f2b4b2"/><circle cx="25.7" cy="31.0" r="1.9" fill="#eba4a8"/><circle cx="23.3" cy="22.3" r="0.9" fill="#fff0ec"/><circle cx="16.7" cy="22.0" r="0.8" fill="#f2b4b2"/><circle cx="31.0" cy="29.8" r="1.8" fill="#fde2de"/><circle cx="28.7" cy="37.6" r="1.1" fill="#fde2de"/><circle cx="18.5" cy="21.4" r="1.1" fill="#eba4a8"/><circle cx="17.9" cy="26.5" r="1.2" fill="#eba4a8"/><circle cx="27.9" cy="25.8" r="1.1" fill="#fff0ec"/><circle cx="23.4" cy="35.4" r="1.4" fill="#eba4a8"/><circle cx="18.7" cy="33.5" r="1.3" fill="#eba4a8"/><circle cx="17.8" cy="20.6" r="1.0" fill="#eba4a8"/><circle cx="27.7" cy="35.3" r="1.6" fill="#eba4a8"/><circle cx="28.9" cy="28.4" r="1.4" fill="#f2b4b2"/><circle cx="21.9" cy="38.1" r="1.8" fill="#eba4a8"/><circle cx="21.0" cy="40.9" r="1.5" fill="#eba4a8"/><circle cx="20.5" cy="32.7" r="1.1" fill="#f2b4b2"/><circle cx="19.8" cy="37.6" r="1.2" fill="#eba4a8"/><ellipse cx="57" cy="31" rx="9" ry="11" fill="#f4c0be"/><circle cx="56.2" cy="21.5" r="1.1" fill="#e89ca2"/><circle cx="52.6" cy="26.2" r="1.4" fill="#f0b0b0"/><circle cx="59.9" cy="34.9" r="1.6" fill="#f0b0b0"/><circle cx="63.4" cy="33.8" r="1.2" fill="#e89ca2"/><circle cx="51.3" cy="29.5" r="1.2" fill="#fcdcd8"/><circle cx="59.0" cy="39.3" r="1.4" fill="#fcdcd8"/><circle cx="65.0" cy="31.9" r="1.6" fill="#fff0ec"/><circle cx="62.9" cy="36.0" r="1.8" fill="#e89ca2"/><circle cx="53.2" cy="34.3" r="0.8" fill="#e89ca2"/><circle cx="51.3" cy="26.3" r="1.5" fill="#fff0ec"/><circle cx="57.1" cy="41.5" r="0.9" fill="#f0b0b0"/><circle cx="53.4" cy="34.0" r="0.9" fill="#f0b0b0"/><circle cx="63.7" cy="31.6" r="1.9" fill="#fcdcd8"/><circle cx="51.5" cy="35.1" r="1.6" fill="#fff0ec"/><circle cx="58.5" cy="26.8" r="1.2" fill="#e89ca2"/><circle cx="50.7" cy="23.2" r="1.7" fill="#fff0ec"/><circle cx="56.8" cy="30.1" r="1.8" fill="#fff0ec"/><circle cx="63.4" cy="35.3" r="1.0" fill="#f0b0b0"/><circle cx="56.5" cy="39.8" r="0.9" fill="#e89ca2"/><circle cx="55.9" cy="25.5" r="1.5" fill="#fff0ec"/><circle cx="53.6" cy="21.3" r="2.0" fill="#e89ca2"/><circle cx="51.5" cy="22.6" r="1.1" fill="#f0b0b0"/><circle cx="61.1" cy="40.2" r="1.8" fill="#fcdcd8"/><circle cx="64.3" cy="27.8" r="1.2" fill="#fff0ec"/><circle cx="54.9" cy="35.7" r="1.9" fill="#fff0ec"/><circle cx="50.5" cy="32.4" r="0.8" fill="#f0b0b0"/><circle cx="49.9" cy="34.6" r="1.5" fill="#e89ca2"/><circle cx="58.4" cy="24.3" r="1.5" fill="#fcdcd8"/><circle cx="57.9" cy="32.4" r="0.9" fill="#fcdcd8"/><circle cx="55.1" cy="34.4" r="0.8" fill="#f0b0b0"/><circle cx="61.7" cy="37.7" r="0.9" fill="#f0b0b0"/><circle cx="56.8" cy="28.2" r="1.5" fill="#e89ca2"/><circle cx="59.8" cy="41.2" r="1.4" fill="#f0b0b0"/><circle cx="62.7" cy="24.4" r="1.7" fill="#fff0ec"/><circle cx="60.2" cy="34.1" r="0.9" fill="#f0b0b0"/><circle cx="65.2" cy="27.7" r="1.7" fill="#f0b0b0"/><circle cx="60.2" cy="23.2" r="1.1" fill="#f0b0b0"/><circle cx="62.4" cy="38.2" r="1.6" fill="#e89ca2"/><circle cx="54.5" cy="37.5" r="0.8" fill="#e89ca2"/><circle cx="58.8" cy="30.0" r="1.7" fill="#e89ca2"/><circle cx="57.8" cy="22.5" r="1.4" fill="#e89ca2"/><circle cx="55.8" cy="29.7" r="1.3" fill="#fff0ec"/><circle cx="54.2" cy="30.6" r="1.4" fill="#f0b0b0"/><circle cx="52.9" cy="29.8" r="1.8" fill="#f0b0b0"/><circle cx="52.7" cy="28.3" r="1.3" fill="#fcdcd8"/><circle cx="55.1" cy="40.3" r="0.9" fill="#e89ca2"/><circle cx="50.7" cy="31.4" r="1.8" fill="#fcdcd8"/><circle cx="63.8" cy="29.3" r="1.9" fill="#e89ca2"/><circle cx="53.8" cy="28.9" r="1.8" fill="#fcdcd8"/><circle cx="54.0" cy="31.0" r="1.6" fill="#f0b0b0"/><circle cx="48.1" cy="31.7" r="1.5" fill="#f0b0b0"/><circle cx="53.3" cy="26.3" r="1.3" fill="#fff0ec"/><circle cx="63.0" cy="25.0" r="1.3" fill="#f0b0b0"/><circle cx="53.6" cy="35.4" r="1.3" fill="#fcdcd8"/><circle cx="50.9" cy="38.1" r="1.1" fill="#fff0ec"/><ellipse cx="40" cy="29" rx="13" ry="14.5" fill="#f5c2c0"/><circle cx="47.0" cy="37.0" r="1.6" fill="#f0b0b0"/><circle cx="35.7" cy="35.8" r="1.0" fill="#fff2ee"/><circle cx="34.1" cy="18.4" r="1.0" fill="#fff2ee"/><circle cx="37.5" cy="22.2" r="1.1" fill="#e89ca2"/><circle cx="28.1" cy="32.2" r="1.1" fill="#fde0dc"/><circle cx="38.8" cy="41.5" r="1.8" fill="#fde0dc"/><circle cx="37.9" cy="14.9" r="1.7" fill="#e89ca2"/><circle cx="44.0" cy="36.0" r="1.0" fill="#f0b0b0"/><circle cx="45.4" cy="39.1" r="1.0" fill="#fde0dc"/><circle cx="51.5" cy="27.7" r="1.7" fill="#fff2ee"/><circle cx="39.4" cy="33.7" r="1.9" fill="#e89ca2"/><circle cx="42.2" cy="37.7" r="0.8" fill="#fff2ee"/><circle cx="45.2" cy="21.4" r="1.1" fill="#e89ca2"/><circle cx="35.2" cy="30.2" r="1.5" fill="#fff2ee"/><circle cx="46.4" cy="29.2" r="1.8" fill="#fff2ee"/><circle cx="46.0" cy="19.2" r="1.6" fill="#fde0dc"/><circle cx="35.5" cy="18.5" r="1.3" fill="#e89ca2"/><circle cx="39.3" cy="41.1" r="1.9" fill="#fde0dc"/><circle cx="42.2" cy="17.0" r="1.6" fill="#e89ca2"/><circle cx="45.3" cy="20.8" r="0.8" fill="#fff2ee"/><circle cx="29.5" cy="27.7" r="1.8" fill="#e89ca2"/><circle cx="41.4" cy="20.1" r="1.4" fill="#f0b0b0"/><circle cx="49.3" cy="31.5" r="1.0" fill="#fde0dc"/><circle cx="35.9" cy="28.4" r="1.5" fill="#fde0dc"/><circle cx="38.1" cy="18.8" r="1.6" fill="#e89ca2"/><circle cx="31.7" cy="27.7" r="1.9" fill="#fde0dc"/><circle cx="45.6" cy="28.6" r="1.4" fill="#f0b0b0"/><circle cx="38.7" cy="17.7" r="1.6" fill="#e89ca2"/><circle cx="38.7" cy="38.1" r="0.8" fill="#fff2ee"/><circle cx="48.9" cy="23.2" r="1.6" fill="#e89ca2"/><circle cx="45.5" cy="34.1" r="1.3" fill="#fde0dc"/><circle cx="52.7" cy="28.5" r="1.4" fill="#fde0dc"/><circle cx="47.9" cy="38.3" r="1.8" fill="#fde0dc"/><circle cx="30.4" cy="31.1" r="1.1" fill="#fde0dc"/><circle cx="33.7" cy="38.2" r="1.8" fill="#fff2ee"/><circle cx="33.1" cy="30.6" r="1.5" fill="#fde0dc"/><circle cx="41.7" cy="19.2" r="1.7" fill="#fde0dc"/><circle cx="39.1" cy="37.8" r="1.1" fill="#fff2ee"/><circle cx="36.1" cy="19.9" r="1.8" fill="#e89ca2"/><circle cx="33.4" cy="38.1" r="1.2" fill="#fff2ee"/><circle cx="30.7" cy="34.0" r="1.6" fill="#e89ca2"/><circle cx="44.1" cy="35.5" r="1.3" fill="#f0b0b0"/><circle cx="45.8" cy="16.8" r="1.7" fill="#fde0dc"/><circle cx="32.5" cy="27.4" r="1.5" fill="#f0b0b0"/><circle cx="40.9" cy="32.8" r="1.2" fill="#f0b0b0"/><circle cx="29.4" cy="22.7" r="1.0" fill="#fff2ee"/><circle cx="37.1" cy="33.7" r="1.9" fill="#fde0dc"/><circle cx="31.7" cy="21.4" r="2.0" fill="#f0b0b0"/><circle cx="34.0" cy="17.1" r="1.7" fill="#e89ca2"/><circle cx="43.5" cy="40.4" r="1.4" fill="#fff2ee"/><circle cx="37.9" cy="24.6" r="0.9" fill="#fff2ee"/><circle cx="40.5" cy="34.4" r="1.4" fill="#f0b0b0"/><circle cx="27.7" cy="30.4" r="1.6" fill="#fde0dc"/><circle cx="30.5" cy="29.1" r="1.8" fill="#f0b0b0"/><circle cx="43.9" cy="35.9" r="1.6" fill="#fff2ee"/><circle cx="34.0" cy="17.5" r="1.2" fill="#fff2ee"/><circle cx="50.7" cy="29.0" r="1.0" fill="#e89ca2"/><circle cx="38.6" cy="27.2" r="1.5" fill="#e89ca2"/><circle cx="41.4" cy="24.9" r="1.4" fill="#fde0dc"/><circle cx="50.8" cy="31.6" r="1.6" fill="#e89ca2"/><circle cx="48.7" cy="35.6" r="1.2" fill="#fde0dc"/><circle cx="38.4" cy="37.3" r="1.1" fill="#f0b0b0"/><circle cx="43.3" cy="22.0" r="1.8" fill="#fff2ee"/><circle cx="33.5" cy="41.4" r="1.8" fill="#e89ca2"/><circle cx="50.4" cy="27.2" r="1.8" fill="#e89ca2"/><circle cx="43.9" cy="40.4" r="1.0" fill="#f0b0b0"/><circle cx="40.6" cy="26.2" r="1.7" fill="#fff2ee"/><circle cx="37.2" cy="28.1" r="1.2" fill="#f0b0b0"/><circle cx="51.3" cy="32.8" r="1.4" fill="#f0b0b0"/><circle cx="43.0" cy="15.6" r="1.5" fill="#fde0dc"/><circle cx="32.4" cy="20.3" r="1.5" fill="#f0b0b0"/><circle cx="42.5" cy="40.5" r="1.3" fill="#fde0dc"/><circle cx="44.5" cy="32.7" r="0.8" fill="#f0b0b0"/><circle cx="49.0" cy="23.0" r="1.2" fill="#fde0dc"/><circle cx="42.2" cy="18.4" r="1.1" fill="#e89ca2"/><circle cx="41.0" cy="31.5" r="0.8" fill="#f0b0b0"/><circle cx="30.6" cy="29.1" r="1.8" fill="#fff2ee"/><circle cx="28.9" cy="22.7" r="1.3" fill="#f0b0b0"/><circle cx="35.7" cy="18.9" r="2.0" fill="#fde0dc"/><circle cx="31.8" cy="30.4" r="0.9" fill="#fff2ee"/><circle cx="41.2" cy="34.5" r="0.8" fill="#f0b0b0"/><circle cx="50.6" cy="29.7" r="2.0" fill="#f0b0b0"/><circle cx="40.9" cy="34.0" r="1.4" fill="#e89ca2"/><circle cx="38.8" cy="22.0" r="1.7" fill="#fde0dc"/><circle cx="47.0" cy="24.9" r="1.7" fill="#fde0dc"/><circle cx="39.5" cy="24.8" r="1.6" fill="#fff2ee"/><circle cx="27.8" cy="32.4" r="1.1" fill="#f0b0b0"/><circle cx="39.7" cy="27.5" r="0.8" fill="#f0b0b0"/><circle cx="34.4" cy="34.2" r="1.5" fill="#fff2ee"/><circle cx="34.3" cy="23.8" r="1.9" fill="#fff2ee"/><circle cx="34.8" cy="30.1" r="2.0" fill="#f0b0b0"/><circle cx="33.2" cy="37.8" r="1.6" fill="#fff2ee"/><circle cx="28.7" cy="30.8" r="1.3" fill="#e89ca2"/><circle cx="42.1" cy="18.3" r="1.2" fill="#f0b0b0"/><circle cx="32.4" cy="20.9" r="1.8" fill="#e89ca2"/><circle cx="47.6" cy="20.0" r="0.8" fill="#fde0dc"/><circle cx="34.2" cy="24.2" r="1.3" fill="#fde0dc"/><circle cx="32.3" cy="37.4" r="1.5" fill="#fde0dc"/><circle cx="42.4" cy="21.8" r="0.8" fill="#e89ca2"/><circle cx="39.4" cy="34.7" r="1.9" fill="#f0b0b0"/>
<circle cx="40" cy="32" r="2.2" fill="#d8506e"/></g>
<rect x="72" y="17" width="8" height="66" fill="#e6868f"/><rect x="74.5" y="17" width="0.8" height="66" fill="#d06a78"/><rect x="77.2" y="17" width="0.8" height="66" fill="#d06a78"/>
<rect x="73" y="21" width="6" height="13" fill="#f6f4f4"/>
</svg>
<div class="a td" style="left:217px;top:164px">5</div>
<div class="a td" style="left:297px;top:164px">23436628</div>
<div class="a td" style="left:377px;top:164px"><span class="k" style="--tw:140.45px">2021-03-08 오전 8:15</span></div>
<div class="a td" style="left:526px;top:164px;font-size:14px"><span class="k" style="--tw:126.00px">거래명세서확인요청</span></div>
<div class="a td" style="left:662px;top:164px;font-size:14px"><span class="k" style="--tw:42.00px">리오더</span></div>
<div class="a td" style="left:742px;top:164px">2021-03-20</div>
<div class="a td" style="left:852px;top:164px;font-size:14px"><span class="k" style="--tw:35.80px">덕평1</span></div>
<div class="a td" style="left:930px;top:164px;font-size:14px"><span class="k" style="--tw:14.00px">러</span></div>
<svg class="a" style="left:22px;top:266px" width="13" height="13" viewBox="0 0 13 13"><rect x="0.5" y="0.5" width="12" height="12" fill="#fff" stroke="#333"/><path d="M2.5 6.5l3 3 5-6" fill="none" stroke="#333" stroke-width="1.2"/></svg>
<div class="a td" style="left:62px;top:264px">3</div>
<svg class="a" style="left:113px;top:223px" width="99" height="99" viewBox="0 0 99 99"><defs><filter id="FB2" x="-10%" y="-10%" width="120%" height="120%"><feGaussianBlur stdDeviation="0.45"/></filter></defs><g filter="url(#FB2)">
<path d="M29.5 38L29.5 88L35 88.5L34 38Z" fill="#52933c"/><path d="M31.5 40L32 88" stroke="#3a7a2a" stroke-width="0.8"/><path d="M27 36L32 43L38 35" fill="none" stroke="#4a9a36" stroke-width="1.5"/>
<rect x="29" y="43" width="5" height="2" fill="#d8c070"/>
<ellipse cx="15" cy="26" rx="9" ry="9" fill="#d9a6bc"/><circle cx="14.2" cy="29.3" r="1.9" fill="#ecccda"/><circle cx="13.8" cy="34.2" r="1.8" fill="#f4e2ea"/><circle cx="13.5" cy="28.2" r="1.5" fill="#f4e2ea"/><circle cx="17.4" cy="33.4" r="1.9" fill="#ecccda"/><circle cx="14.2" cy="28.0" r="1.3" fill="#ecccda"/><circle cx="21.2" cy="22.9" r="0.8" fill="#f4e2ea"/><circle cx="12.4" cy="26.7" r="1.8" fill="#c88aa8"/><circle cx="15.7" cy="32.8" r="1.9" fill="#b06c8e"/><circle cx="8.2" cy="27.0" r="1.0" fill="#ecccda"/><circle cx="21.8" cy="30.4" r="1.1" fill="#b06c8e"/><circle cx="9.7" cy="29.7" r="1.0" fill="#c88aa8"/><circle cx="20.6" cy="23.0" r="1.8" fill="#b06c8e"/><circle cx="9.6" cy="20.1" r="1.0" fill="#c88aa8"/><circle cx="11.4" cy="31.4" r="0.8" fill="#c88aa8"/><circle cx="17.4" cy="34.1" r="1.5" fill="#ecccda"/><circle cx="14.4" cy="33.9" r="1.3" fill="#f4e2ea"/><circle cx="15.9" cy="17.9" r="2.0" fill="#b06c8e"/><circle cx="17.9" cy="21.6" r="2.0" fill="#f4e2ea"/><circle cx="16.8" cy="27.0" r="1.5" fill="#f4e2ea"/><circle cx="6.8" cy="26.7" r="1.9" fill="#f4e2ea"/><circle cx="21.7" cy="22.4" r="0.9" fill="#b06c8e"/><circle cx="8.4" cy="23.2" r="1.9" fill="#f4e2ea"/><circle cx="18.4" cy="33.6" r="1.2" fill="#ecccda"/><circle cx="19.2" cy="25.8" r="0.8" fill="#b06c8e"/><circle cx="17.0" cy="25.2" r="1.5" fill="#c88aa8"/><circle cx="16.0" cy="24.3" r="1.7" fill="#f4e2ea"/><circle cx="18.2" cy="27.2" r="1.7" fill="#ecccda"/><circle cx="12.8" cy="21.6" r="1.5" fill="#c88aa8"/><circle cx="9.6" cy="27.0" r="1.3" fill="#b06c8e"/><circle cx="11.3" cy="26.4" r="1.1" fill="#ecccda"/><circle cx="22.3" cy="21.6" r="1.4" fill="#ecccda"/><circle cx="16.1" cy="22.6" r="1.8" fill="#c88aa8"/><circle cx="22.7" cy="22.6" r="1.9" fill="#ecccda"/><circle cx="16.6" cy="17.3" r="1.9" fill="#f4e2ea"/><circle cx="18.9" cy="20.0" r="1.3" fill="#b06c8e"/><circle cx="13.1" cy="29.9" r="0.9" fill="#b06c8e"/><circle cx="17.6" cy="29.3" r="0.9" fill="#f4e2ea"/><circle cx="11.8" cy="24.9" r="1.8" fill="#b06c8e"/><circle cx="11.1" cy="28.2" r="0.8" fill="#b06c8e"/><circle cx="13.1" cy="29.2" r="1.4" fill="#b06c8e"/><circle cx="9.0" cy="27.7" r="1.0" fill="#c88aa8"/><circle cx="9.6" cy="20.1" r="1.9" fill="#f4e2ea"/><circle cx="16.6" cy="23.3" r="1.7" fill="#b06c8e"/><circle cx="10.8" cy="27.9" r="1.1" fill="#ecccda"/><circle cx="19.0" cy="28.8" r="1.9" fill="#c88aa8"/><circle cx="19.4" cy="18.3" r="1.0" fill="#c88aa8"/><circle cx="9.0" cy="28.3" r="1.4" fill="#f4e2ea"/><circle cx="23.2" cy="26.1" r="1.4" fill="#ecccda"/><circle cx="13.8" cy="27.4" r="1.3" fill="#b06c8e"/><circle cx="12.0" cy="24.6" r="1.0" fill="#ecccda"/><ellipse cx="47" cy="27" rx="10" ry="10" fill="#d49eb6"/><circle cx="45.9" cy="22.7" r="0.9" fill="#c484a4"/><circle cx="53.6" cy="21.5" r="1.7" fill="#e8c6d4"/><circle cx="49.1" cy="34.5" r="1.6" fill="#e8c6d4"/><circle cx="43.1" cy="24.8" r="0.9" fill="#f4e2ea"/><circle cx="52.2" cy="19.0" r="1.4" fill="#a85c80"/><circle cx="42.3" cy="34.9" r="1.8" fill="#f4e2ea"/><circle cx="52.4" cy="30.4" r="1.7" fill="#e8c6d4"/><circle cx="50.6" cy="23.3" r="1.0" fill="#a85c80"/><circle cx="55.2" cy="28.9" r="1.5" fill="#c484a4"/><circle cx="41.0" cy="34.6" r="2.0" fill="#c484a4"/><circle cx="53.1" cy="32.8" r="1.8" fill="#a85c80"/><circle cx="48.7" cy="17.8" r="1.5" fill="#c484a4"/><circle cx="46.2" cy="30.2" r="1.7" fill="#f4e2ea"/><circle cx="39.7" cy="26.4" r="1.4" fill="#c484a4"/><circle cx="47.1" cy="30.0" r="1.5" fill="#e8c6d4"/><circle cx="51.0" cy="30.0" r="1.8" fill="#c484a4"/><circle cx="56.6" cy="28.2" r="1.7" fill="#a85c80"/><circle cx="54.7" cy="27.9" r="1.5" fill="#e8c6d4"/><circle cx="46.1" cy="23.9" r="1.8" fill="#e8c6d4"/><circle cx="50.4" cy="28.0" r="1.4" fill="#a85c80"/><circle cx="49.7" cy="29.2" r="1.9" fill="#e8c6d4"/><circle cx="49.5" cy="24.1" r="1.5" fill="#f4e2ea"/><circle cx="51.7" cy="34.8" r="1.9" fill="#f4e2ea"/><circle cx="44.3" cy="19.7" r="1.5" fill="#c484a4"/><circle cx="39.3" cy="32.9" r="1.7" fill="#a85c80"/><circle cx="39.6" cy="32.3" r="1.7" fill="#a85c80"/><circle cx="50.7" cy="18.6" r="0.9" fill="#e8c6d4"/><circle cx="56.3" cy="24.5" r="1.1" fill="#f4e2ea"/><circle cx="46.4" cy="26.1" r="0.9" fill="#e8c6d4"/><circle cx="53.0" cy="29.8" r="1.4" fill="#c484a4"/><circle cx="48.0" cy="33.4" r="1.3" fill="#f4e2ea"/><circle cx="41.0" cy="20.3" r="1.9" fill="#c484a4"/><circle cx="54.8" cy="28.7" r="1.1" fill="#a85c80"/><circle cx="40.8" cy="20.5" r="0.8" fill="#c484a4"/><circle cx="47.0" cy="34.2" r="1.3" fill="#c484a4"/><circle cx="45.7" cy="32.4" r="1.6" fill="#c484a4"/><circle cx="56.1" cy="30.6" r="1.9" fill="#a85c80"/><circle cx="53.6" cy="30.9" r="1.9" fill="#f4e2ea"/><circle cx="49.6" cy="29.5" r="1.2" fill="#f4e2ea"/><circle cx="42.4" cy="24.6" r="1.7" fill="#a85c80"/><circle cx="51.2" cy="20.4" r="1.5" fill="#f4e2ea"/><circle cx="49.5" cy="35.0" r="1.4" fill="#a85c80"/><circle cx="41.8" cy="22.5" r="1.2" fill="#e8c6d4"/><circle cx="44.8" cy="30.8" r="1.5" fill="#f4e2ea"/><circle cx="52.9" cy="27.4" r="1.8" fill="#e8c6d4"/><circle cx="44.4" cy="32.1" r="1.1" fill="#e8c6d4"/><circle cx="44.5" cy="35.4" r="1.0" fill="#c484a4"/><circle cx="42.4" cy="23.4" r="1.6" fill="#f4e2ea"/><circle cx="50.0" cy="21.9" r="1.7" fill="#e8c6d4"/><circle cx="55.2" cy="26.4" r="1.9" fill="#f4e2ea"/><circle cx="43.9" cy="32.1" r="1.6" fill="#a85c80"/><circle cx="50.1" cy="20.5" r="1.7" fill="#f4e2ea"/><circle cx="46.1" cy="34.9" r="1.6" fill="#e8c6d4"/><circle cx="44.3" cy="28.7" r="1.3" fill="#c484a4"/><circle cx="37.2" cy="27.1" r="1.5" fill="#f4e2ea"/><ellipse cx="31" cy="23" rx="14" ry="12.5" fill="#cf98b2"/><circle cx="35.3" cy="17.7" r="1.5" fill="#c084a2"/><circle cx="24.2" cy="28.8" r="1.3" fill="#a25478"/><circle cx="28.7" cy="30.5" r="1.5" fill="#f6e6ee"/><circle cx="30.3" cy="22.2" r="1.7" fill="#f6e6ee"/><circle cx="25.4" cy="27.7" r="1.4" fill="#ecccda"/><circle cx="23.1" cy="26.0" r="1.1" fill="#a25478"/><circle cx="25.2" cy="33.3" r="1.8" fill="#a25478"/><circle cx="33.6" cy="30.8" r="1.9" fill="#c084a2"/><circle cx="38.0" cy="24.0" r="1.9" fill="#a25478"/><circle cx="41.8" cy="17.7" r="1.4" fill="#f6e6ee"/><circle cx="21.0" cy="22.0" r="1.6" fill="#f6e6ee"/><circle cx="28.2" cy="23.6" r="1.6" fill="#f6e6ee"/><circle cx="41.9" cy="19.7" r="1.4" fill="#c084a2"/><circle cx="22.7" cy="27.8" r="1.6" fill="#ecccda"/><circle cx="41.0" cy="14.6" r="1.4" fill="#f6e6ee"/><circle cx="32.4" cy="11.2" r="1.5" fill="#c084a2"/><circle cx="34.8" cy="29.2" r="2.0" fill="#a25478"/><circle cx="26.4" cy="22.7" r="1.9" fill="#a25478"/><circle cx="37.0" cy="11.8" r="1.9" fill="#f6e6ee"/><circle cx="24.1" cy="16.4" r="1.8" fill="#ecccda"/><circle cx="24.9" cy="22.8" r="1.0" fill="#c084a2"/><circle cx="22.6" cy="32.9" r="1.6" fill="#c084a2"/><circle cx="30.5" cy="21.8" r="0.8" fill="#c084a2"/><circle cx="38.7" cy="19.1" r="0.9" fill="#c084a2"/><circle cx="27.9" cy="18.2" r="1.4" fill="#a25478"/><circle cx="40.1" cy="14.4" r="1.4" fill="#ecccda"/><circle cx="23.0" cy="19.4" r="0.9" fill="#ecccda"/><circle cx="21.1" cy="22.0" r="0.8" fill="#c084a2"/><circle cx="35.8" cy="30.9" r="1.8" fill="#f6e6ee"/><circle cx="32.2" cy="20.1" r="0.8" fill="#a25478"/><circle cx="35.2" cy="27.8" r="1.1" fill="#c084a2"/><circle cx="30.5" cy="26.9" r="1.9" fill="#c084a2"/><circle cx="25.5" cy="29.8" r="1.3" fill="#c084a2"/><circle cx="32.6" cy="30.7" r="1.7" fill="#c084a2"/><circle cx="20.8" cy="26.6" r="1.1" fill="#c084a2"/><circle cx="36.8" cy="31.1" r="1.0" fill="#c084a2"/><circle cx="41.2" cy="16.3" r="1.2" fill="#a25478"/><circle cx="40.5" cy="20.8" r="1.9" fill="#ecccda"/><circle cx="25.9" cy="13.8" r="1.5" fill="#f6e6ee"/><circle cx="26.2" cy="33.9" r="1.4" fill="#ecccda"/><circle cx="35.9" cy="25.7" r="1.3" fill="#c084a2"/><circle cx="38.4" cy="21.8" r="1.5" fill="#c084a2"/><circle cx="24.3" cy="33.0" r="1.2" fill="#c084a2"/><circle cx="39.8" cy="21.0" r="1.9" fill="#ecccda"/><circle cx="23.7" cy="28.6" r="1.2" fill="#f6e6ee"/><circle cx="42.1" cy="25.2" r="1.2" fill="#ecccda"/><circle cx="31.3" cy="27.5" r="1.0" fill="#ecccda"/><circle cx="22.0" cy="20.1" r="1.8" fill="#ecccda"/><circle cx="35.5" cy="29.3" r="1.7" fill="#f6e6ee"/><circle cx="23.7" cy="16.1" r="1.2" fill="#f6e6ee"/><circle cx="24.3" cy="22.8" r="1.3" fill="#ecccda"/><circle cx="44.1" cy="18.6" r="1.5" fill="#f6e6ee"/><circle cx="23.8" cy="19.0" r="1.1" fill="#ecccda"/><circle cx="39.5" cy="30.7" r="1.6" fill="#c084a2"/><circle cx="24.0" cy="21.3" r="1.7" fill="#f6e6ee"/><circle cx="42.7" cy="24.9" r="1.0" fill="#c084a2"/><circle cx="27.8" cy="25.3" r="1.0" fill="#ecccda"/><circle cx="26.1" cy="32.2" r="0.9" fill="#a25478"/><circle cx="35.1" cy="12.8" r="1.0" fill="#a25478"/><circle cx="37.4" cy="26.5" r="1.8" fill="#f6e6ee"/><circle cx="29.2" cy="30.8" r="1.9" fill="#ecccda"/><circle cx="36.4" cy="21.0" r="1.2" fill="#a25478"/><circle cx="32.8" cy="21.8" r="1.6" fill="#f6e6ee"/><circle cx="31.1" cy="34.5" r="1.2" fill="#c084a2"/><circle cx="33.0" cy="26.9" r="1.9" fill="#ecccda"/><circle cx="30.3" cy="20.6" r="0.8" fill="#ecccda"/><circle cx="20.0" cy="27.6" r="1.0" fill="#c084a2"/><circle cx="20.5" cy="19.8" r="1.9" fill="#ecccda"/><circle cx="20.3" cy="18.5" r="1.1" fill="#f6e6ee"/><circle cx="25.9" cy="14.7" r="1.9" fill="#c084a2"/><circle cx="37.2" cy="13.5" r="1.1" fill="#c084a2"/><circle cx="38.6" cy="16.2" r="1.6" fill="#ecccda"/><circle cx="29.9" cy="20.8" r="1.2" fill="#a25478"/><circle cx="31.0" cy="19.3" r="1.6" fill="#f6e6ee"/><circle cx="42.0" cy="22.9" r="1.1" fill="#c084a2"/><circle cx="23.0" cy="32.9" r="1.3" fill="#a25478"/><circle cx="26.7" cy="13.0" r="1.8" fill="#f6e6ee"/><circle cx="19.5" cy="22.4" r="1.0" fill="#ecccda"/><circle cx="24.9" cy="23.4" r="1.9" fill="#a25478"/><circle cx="33.6" cy="27.5" r="1.7" fill="#ecccda"/><circle cx="24.3" cy="21.3" r="0.9" fill="#a25478"/><circle cx="28.6" cy="26.1" r="1.6" fill="#ecccda"/><circle cx="38.7" cy="31.0" r="1.6" fill="#ecccda"/><circle cx="30.7" cy="22.1" r="1.6" fill="#ecccda"/><circle cx="38.6" cy="20.1" r="1.2" fill="#ecccda"/><circle cx="25.1" cy="19.8" r="1.6" fill="#c084a2"/><circle cx="19.3" cy="19.7" r="1.0" fill="#ecccda"/><circle cx="23.3" cy="18.1" r="1.7" fill="#ecccda"/><circle cx="36.7" cy="27.4" r="1.2" fill="#ecccda"/><circle cx="43.8" cy="26.2" r="1.2" fill="#c084a2"/><circle cx="28.2" cy="15.0" r="0.9" fill="#a25478"/><circle cx="21.1" cy="26.2" r="1.1" fill="#c084a2"/><circle cx="40.2" cy="25.4" r="2.0" fill="#f6e6ee"/><circle cx="41.2" cy="28.3" r="2.0" fill="#a25478"/><circle cx="38.6" cy="28.5" r="1.3" fill="#ecccda"/><circle cx="32.7" cy="16.1" r="1.2" fill="#c084a2"/><circle cx="24.2" cy="15.2" r="1.9" fill="#a25478"/><circle cx="28.8" cy="20.1" r="1.7" fill="#c084a2"/><circle cx="33.0" cy="11.7" r="1.2" fill="#ecccda"/><circle cx="40.9" cy="20.9" r="1.9" fill="#ecccda"/><circle cx="40.5" cy="29.3" r="1.2" fill="#a25478"/><circle cx="22.8" cy="29.9" r="1.2" fill="#ecccda"/><circle cx="24.0" cy="29.8" r="1.2" fill="#a25478"/><circle cx="31.2" cy="25.5" r="1.5" fill="#f6e6ee"/><circle cx="42.3" cy="16.2" r="1.4" fill="#f6e6ee"/><circle cx="29.3" cy="10.6" r="1.5" fill="#c084a2"/><circle cx="35.2" cy="27.6" r="1.0" fill="#f6e6ee"/><circle cx="33.4" cy="24.3" r="1.3" fill="#ecccda"/><circle cx="32.7" cy="30.5" r="0.8" fill="#f6e6ee"/><circle cx="33.3" cy="25.6" r="0.9" fill="#f6e6ee"/></g>
<g fill="#e9d6b5"><rect x="55" y="17" width="7" height="67"/><rect x="64" y="17" width="7" height="67"/><rect x="73" y="17" width="7" height="67"/><rect x="82" y="17" width="7" height="67"/></g>
<g fill="#cdb590"><rect x="57.5" y="31" width="0.8" height="53"/><rect x="59.5" y="31" width="0.6" height="53"/><rect x="66.5" y="31" width="0.8" height="53"/><rect x="68.5" y="31" width="0.6" height="53"/><rect x="75.5" y="31" width="0.8" height="53"/><rect x="77.5" y="31" width="0.6" height="53"/><rect x="84.5" y="31" width="0.8" height="53"/><rect x="86.5" y="31" width="0.6" height="53"/></g>
<g fill="#fbfaf6"><rect x="56" y="19" width="5" height="12"/><rect x="65" y="19" width="5" height="12"/><rect x="74" y="19" width="5" height="12"/><rect x="83" y="19" width="5" height="12"/></g>
</svg>
<div class="a td" style="left:217px;top:264px">5</div>
<div class="a td" style="left:297px;top:264px">23436628</div>
<div class="a td" style="left:377px;top:264px"><span class="k" style="--tw:140.45px">2021-03-08 오전 8:15</span></div>
<div class="a td" style="left:526px;top:264px;font-size:14px"><span class="k" style="--tw:126.00px">거래명세서확인요청</span></div>
<div class="a td" style="left:662px;top:264px;font-size:14px"><span class="k" style="--tw:42.00px">리오더</span></div>
<div class="a td" style="left:742px;top:264px">2021-03-20</div>
<div class="a td" style="left:852px;top:264px;font-size:14px"><span class="k" style="--tw:35.80px">덕평1</span></div>
<div class="a td" style="left:930px;top:264px;font-size:14px"><span class="k" style="--tw:14.00px">러</span></div>
<svg class="a" style="left:22px;top:366px" width="13" height="13" viewBox="0 0 13 13"><rect x="0.5" y="0.5" width="12" height="12" fill="#fff" stroke="#333"/><path d="M2.5 6.5l3 3 5-6" fill="none" stroke="#333" stroke-width="1.2"/></svg>
<div class="a td" style="left:62px;top:364px">4</div>
<svg class="a" style="left:113px;top:323px" width="99" height="99" viewBox="0 0 99 99">
<path d="M40 6Q41 1 47 1L62 1Q67 1 68 6" fill="none" stroke="#8f4e3e" stroke-width="1.3"/>
<rect x="12" y="6" width="84" height="47" fill="#0b0606" stroke="#d8ccb0" stroke-width="0.6"/>
<rect x="34.5" y="21.5" width="41" height="17" fill="none" stroke="#cfc6b0" stroke-width="0.8"/>
<rect x="37" y="28" width="35" height="1.2" fill="#9e9688"/><rect x="49" y="31" width="11" height="0.8" fill="#6e675c"/>
<rect x="2.5" y="45.5" width="85" height="48" fill="#fff" stroke="#1a1a1a" stroke-width="1"/>
<rect x="15" y="49" width="60" height="0.6" fill="#555"/><rect x="15" y="54" width="60" height="0.6" fill="#555"/><rect x="20" y="51" width="50" height="1.4" fill="#777"/>
<path d="M9 59H17L14 63V66H12V63Z" fill="#bbb"/>
<g stroke="#d8c8a0" stroke-width="0.6"><path d="M30 78L23 65M30 78L30 63M30 78L36 64M46 78L39 64M46 78L46 63M46 78L52 64M62 78L55 64M62 78L62 63M62 78L68 64"/></g>
<g fill="#f4f4f4" stroke="#ddd" stroke-width="0.4"><circle cx="23" cy="64" r="3.5"/><circle cx="30" cy="62" r="3.5"/><circle cx="36" cy="64" r="3.5"/><circle cx="39" cy="64" r="3.5"/><circle cx="46" cy="62" r="3.5"/><circle cx="52" cy="64" r="3.5"/><circle cx="55" cy="64" r="3.5"/><circle cx="62" cy="62" r="3.5"/><circle cx="68" cy="64" r="3.5"/></g>
<g fill="#eceeee" stroke="#c8c8c8" stroke-width="0.5"><rect x="9" y="72" width="8" height="18" rx="1"/><rect x="74" y="72" width="8" height="18" rx="1"/><rect x="24" y="81" width="11" height="9" rx="2"/><rect x="40" y="81" width="11" height="9" rx="2"/><rect x="56" y="81" width="11" height="9" rx="2"/></g>
<g fill="#111"><rect x="11" y="68" width="4" height="4"/><rect x="76" y="68" width="4" height="4"/><rect x="27" y="77" width="5" height="4"/><rect x="43" y="77" width="5" height="4"/><rect x="59" y="77" width="5" height="4"/></g>
</svg>
<div class="a td" style="left:217px;top:364px">5</div>
<div class="a td" style="left:297px;top:364px">23436628</div>
<div class="a td" style="left:377px;top:364px"><span class="k" style="--tw:140.45px">2021-03-08 오전 8:15</span></div>
<div class="a td" style="left:526px;top:364px;font-size:14px"><span class="k" style="--tw:126.00px">거래명세서확인요청</span></div>
<div class="a td" style="left:662px;top:364px;font-size:14px"><span class="k" style="--tw:42.00px">리오더</span></div>
<div class="a td" style="left:742px;top:364px">2021-03-20</div>
<div class="a td" style="left:852px;top:364px;font-size:14px"><span class="k" style="--tw:35.80px">덕평1</span></div>
<div class="a td" style="left:930px;top:364px;font-size:14px"><span class="k" style="--tw:14.00px">러</span></div>
<svg class="a" style="left:22px;top:466px" width="13" height="13" viewBox="0 0 13 13"><rect x="0.5" y="0.5" width="12" height="12" fill="#fff" stroke="#333"/><path d="M2.5 6.5l3 3 5-6" fill="none" stroke="#333" stroke-width="1.2"/></svg>
<div class="a td" style="left:62px;top:464px">5</div>
<svg class="a" style="left:113px;top:423px" width="99" height="99" viewBox="0 0 99 99"><defs><linearGradient id="bg5" x1="0" x2="1"><stop offset="0" stop-color="#eeeeee"/><stop offset="0.45" stop-color="#f9f9f9"/><stop offset="0.85" stop-color="#ececec"/><stop offset="1" stop-color="#dedede"/></linearGradient><filter id="FB5"><feGaussianBlur stdDeviation="0.5"/></filter><filter id="FB5b" x="-50%" y="-20%" width="200%" height="140%"><feGaussianBlur stdDeviation="2"/></filter></defs>
<g filter="url(#FB5)">
<rect x="58" y="33" width="11" height="60" rx="5" fill="#ececec" filter="url(#FB5b)"/>
<path d="M41 14Q41 6 49 6Q57 6 57 14L57 23Q57 27 62 29Q65 31 65 36L65 88Q65 93 49 93Q34 93 34 88L34 36Q34 31 37 29Q41 27 41 23Z" fill="url(#bg5)"/>
<path d="M41 24Q49 26 57 24" fill="none" stroke="#e2e2e2" stroke-width="0.8"/>
<rect x="34" y="35" width="31" height="19" fill="#f4c6dc"/>
<rect x="44" y="37" width="12" height="16" fill="#fff"/>
<rect x="47" y="39" width="6" height="0.8" fill="#888"/><rect x="46.5" y="42" width="7" height="0.8" fill="#999"/><rect x="46.5" y="44" width="7" height="0.8" fill="#999"/><rect x="48" y="46" width="4" height="0.8" fill="#999"/><rect x="46" y="50" width="8" height="0.8" fill="#777"/>
<path d="M34 36Q38 35 40 38L37 40L34 39Z" fill="#2f8a4a"/><path d="M36 52Q39 48 41 49L38 54Z" fill="#2f8a4a"/><path d="M60 53L64 52L63 54Z" fill="#2f8a4a"/>
<ellipse cx="60" cy="46" rx="3.5" ry="6" fill="#c8a27c"/><path d="M57 41L65 40L65 42L58 43Z" fill="#58b6d4"/>
</g></svg>
<div class="a td" style="left:217px;top:464px">5</div>
<div class="a td" style="left:297px;top:464px">23436628</div>
<div class="a td" style="left:377px;top:464px"><span class="k" style="--tw:140.45px">2021-03-08 오전 8:15</span></div>
<div class="a td" style="left:526px;top:464px;font-size:14px"><span class="k" style="--tw:126.00px">거래명세서확인요청</span></div>
<div class="a td" style="left:662px;top:464px;font-size:14px"><span class="k" style="--tw:42.00px">리오더</span></div>
<div class="a td" style="left:742px;top:464px">2021-03-20</div>
<div class="a td" style="left:852px;top:464px;font-size:14px"><span class="k" style="--tw:35.80px">덕평1</span></div>
<div class="a td" style="left:930px;top:464px;font-size:14px"><span class="k" style="--tw:14.00px">이</span></div>
<svg class="a" style="left:22px;top:566px" width="13" height="13" viewBox="0 0 13 13"><rect x="0.5" y="0.5" width="12" height="12" fill="#fff" stroke="#333"/><path d="M2.5 6.5l3 3 5-6" fill="none" stroke="#333" stroke-width="1.2"/></svg>
<div class="a td" style="left:62px;top:564px">6</div>
<svg class="a" style="left:113px;top:523px" width="99" height="99" viewBox="0 0 99 99">
<defs><linearGradient id="cola1" x1="0" x2="1"><stop offset="0" stop-color="#8a8a8a"/><stop offset="0.15" stop-color="#1e1e1e"/><stop offset="0.3" stop-color="#555"/><stop offset="0.5" stop-color="#e8e8e8"/><stop offset="0.75" stop-color="#9a9a9a"/><stop offset="1" stop-color="#c8c8c8"/></linearGradient>
<linearGradient id="bula1" x1="0" x2="1"><stop offset="0" stop-color="#e4e4e4"/><stop offset="0.5" stop-color="#fafafa"/><stop offset="1" stop-color="#dcdcdc"/></linearGradient></defs>
<rect x="23.5" y="26" width="9" height="52" rx="4" fill="#ececec" filter="url(#SHB)"/>
<rect x="19.0" y="22" width="7" height="12" rx="3.5" fill="url(#bula1)"/>
<rect x="17.0" y="33" width="11" height="9" fill="url(#cola1)"/>
<rect x="16.0" y="41.5" width="13" height="1.8" fill="#a8a8a8"/>
<path d="M16.5 43.3L28.5 43.3Q31.5 45 31.5 49L31.5 73Q31.5 76.5 27.5 76.5L17.5 76.5Q13.5 76.5 13.5 73L13.5 49Q13.5 45 16.5 43.3Z" fill="#e9e9e9" stroke="#bdbdbd" stroke-width="0.7"/>
<rect x="14.2" y="48.5" width="16.6" height="24" fill="#b6dc98"/><rect x="30.2" y="51.5" width="2.4" height="1.7" fill="#5fae3a"/><rect x="15.6" y="59.3" width="1.8" height="1.3" fill="#d0ecb8"/><rect x="20.6" y="72.3" width="1.3" height="1.2" fill="#d0ecb8"/><rect x="15.2" y="50.0" width="2.1" height="1.9" fill="#3f8f2a"/><rect x="15.4" y="54.7" width="1.9" height="2.4" fill="#d0ecb8"/><rect x="20.5" y="72.2" width="1.7" height="2.4" fill="#3f8f2a"/><rect x="14.3" y="59.9" width="1.4" height="2.0" fill="#3f8f2a"/><rect x="22.3" y="71.6" width="1.5" height="1.9" fill="#8ccc64"/><rect x="25.1" y="49.9" width="2.3" height="2.5" fill="#8ccc64"/><rect x="29.6" y="49.9" width="1.9" height="2.1" fill="#8ccc64"/><rect x="18.8" y="48.6" width="2.3" height="2.5" fill="#5fae3a"/><rect x="27.0" y="49.1" width="1.2" height="1.4" fill="#d0ecb8"/><rect x="14.3" y="62.6" width="1.1" height="2.1" fill="#3f8f2a"/><rect x="22.3" y="50.0" width="1.5" height="1.1" fill="#5fae3a"/><rect x="30.8" y="55.2" width="1.4" height="2.0" fill="#3f8f2a"/><rect x="20.0" y="48.7" width="2.3" height="1.6" fill="#d0ecb8"/><rect x="15.1" y="70.1" width="1.8" height="1.6" fill="#8ccc64"/><rect x="21.2" y="48.9" width="1.5" height="1.5" fill="#d0ecb8"/><rect x="14.5" y="49.4" width="1.9" height="1.1" fill="#3f8f2a"/><rect x="19.8" y="72.4" width="1.9" height="1.4" fill="#d0ecb8"/><rect x="15.1" y="70.5" width="1.0" height="1.6" fill="#d0ecb8"/><rect x="23.7" y="49.0" width="1.5" height="1.5" fill="#3f8f2a"/><rect x="19.0" y="49.1" width="2.2" height="1.0" fill="#8ccc64"/><rect x="22.2" y="49.5" width="1.4" height="1.5" fill="#d0ecb8"/><rect x="14.4" y="55.9" width="1.5" height="2.3" fill="#d0ecb8"/><rect x="29.4" y="65.6" width="1.3" height="1.9" fill="#3f8f2a"/><rect x="16.2" y="50.8" width="12.6" height="19.6" fill="#fff"/>
<rect x="20.5" y="53" width="4" height="0.8" fill="#777"/><rect x="19.5" y="56" width="6" height="2.2" fill="#9a9a9a"/><rect x="20.5" y="59.5" width="4" height="1" fill="#aaa"/><rect x="18.0" y="67.5" width="9" height="0.8" fill="#888"/>
<defs><linearGradient id="cola2" x1="0" x2="1"><stop offset="0" stop-color="#8a8a8a"/><stop offset="0.15" stop-color="#1e1e1e"/><stop offset="0.3" stop-color="#555"/><stop offset="0.5" stop-color="#e8e8e8"/><stop offset="0.75" stop-color="#9a9a9a"/><stop offset="1" stop-color="#c8c8c8"/></linearGradient>
<linearGradient id="bula2" x1="0" x2="1"><stop offset="0" stop-color="#e4e4e4"/><stop offset="0.5" stop-color="#fafafa"/><stop offset="1" stop-color="#dcdcdc"/></linearGradient></defs>
<rect x="50.5" y="26" width="9" height="52" rx="4" fill="#ececec" filter="url(#SHB)"/>
<rect x="46.0" y="22" width="7" height="12" rx="3.5" fill="url(#bula2)"/>
<rect x="44.0" y="33" width="11" height="9" fill="url(#cola2)"/>
<rect x="43.0" y="41.5" width="13" height="1.8" fill="#a8a8a8"/>
<path d="M43.5 43.3L55.5 43.3Q58.5 45 58.5 49L58.5 73Q58.5 76.5 54.5 76.5L44.5 76.5Q40.5 76.5 40.5 73L40.5 49Q40.5 45 43.5 43.3Z" fill="#e9e9e9" stroke="#bdbdbd" stroke-width="0.7"/>
<rect x="41.2" y="48.5" width="16.6" height="24" fill="#b6dc98"/><rect x="57.5" y="49.3" width="2.4" height="1.5" fill="#8ccc64"/><rect x="46.6" y="49.7" width="1.1" height="1.9" fill="#8ccc64"/><rect x="45.9" y="72.2" width="1.4" height="1.5" fill="#d0ecb8"/><rect x="47.9" y="49.1" width="2.4" height="1.2" fill="#5fae3a"/><rect x="56.3" y="72.3" width="2.5" height="1.7" fill="#8ccc64"/><rect x="42.3" y="67.7" width="2.0" height="1.8" fill="#3f8f2a"/><rect x="55.4" y="49.8" width="2.3" height="2.5" fill="#5fae3a"/><rect x="56.4" y="69.3" width="2.0" height="2.4" fill="#d0ecb8"/><rect x="41.2" y="65.6" width="1.3" height="1.4" fill="#5fae3a"/><rect x="42.1" y="72.4" width="1.2" height="1.2" fill="#d0ecb8"/><rect x="41.7" y="53.0" width="1.8" height="2.2" fill="#8ccc64"/><rect x="57.5" y="69.7" width="2.2" height="2.2" fill="#5fae3a"/><rect x="51.3" y="72.3" width="1.1" height="1.4" fill="#3f8f2a"/><rect x="42.0" y="71.5" width="2.2" height="2.3" fill="#8ccc64"/><rect x="41.4" y="50.1" width="2.5" height="2.3" fill="#5fae3a"/><rect x="46.3" y="71.5" width="1.5" height="2.0" fill="#3f8f2a"/><rect x="45.4" y="50.0" width="1.6" height="1.2" fill="#5fae3a"/><rect x="53.9" y="71.9" width="1.1" height="1.7" fill="#d0ecb8"/><rect x="42.1" y="58.4" width="1.6" height="1.7" fill="#3f8f2a"/><rect x="56.4" y="71.6" width="1.0" height="1.3" fill="#3f8f2a"/><rect x="42.4" y="53.7" width="1.2" height="1.0" fill="#3f8f2a"/><rect x="56.7" y="49.3" width="2.3" height="1.2" fill="#5fae3a"/><rect x="51.9" y="72.1" width="1.8" height="1.2" fill="#5fae3a"/><rect x="43.5" y="72.2" width="1.1" height="1.1" fill="#5fae3a"/><rect x="44.1" y="71.0" width="2.3" height="1.2" fill="#5fae3a"/><rect x="54.6" y="72.4" width="1.9" height="2.2" fill="#5fae3a"/><rect x="43.2" y="50.8" width="12.6" height="19.6" fill="#fff"/>
<rect x="47.5" y="53" width="4" height="0.8" fill="#777"/><rect x="46.5" y="56" width="6" height="2.2" fill="#9a9a9a"/><rect x="47.5" y="59.5" width="4" height="1" fill="#aaa"/><rect x="45.0" y="67.5" width="9" height="0.8" fill="#888"/>
<defs><linearGradient id="cola3" x1="0" x2="1"><stop offset="0" stop-color="#8a8a8a"/><stop offset="0.15" stop-color="#1e1e1e"/><stop offset="0.3" stop-color="#555"/><stop offset="0.5" stop-color="#e8e8e8"/><stop offset="0.75" stop-color="#9a9a9a"/><stop offset="1" stop-color="#c8c8c8"/></linearGradient>
<linearGradient id="bula3" x1="0" x2="1"><stop offset="0" stop-color="#e4e4e4"/><stop offset="0.5" stop-color="#fafafa"/><stop offset="1" stop-color="#dcdcdc"/></linearGradient></defs>
<rect x="77.5" y="26" width="9" height="52" rx="4" fill="#ececec" filter="url(#SHB)"/>
<rect x="73.0" y="22" width="7" height="12" rx="3.5" fill="url(#bula3)"/>
<rect x="71.0" y="33" width="11" height="9" fill="url(#cola3)"/>
<rect x="70.0" y="41.5" width="13" height="1.8" fill="#a8a8a8"/>
<path d="M70.5 43.3L82.5 43.3Q85.5 45 85.5 49L85.5 73Q85.5 76.5 81.5 76.5L71.5 76.5Q67.5 76.5 67.5 73L67.5 49Q67.5 45 70.5 43.3Z" fill="#e9e9e9" stroke="#bdbdbd" stroke-width="0.7"/>
<rect x="68.2" y="48.5" width="16.6" height="24" fill="#b6dc98"/><rect x="83.5" y="65.7" width="2.4" height="1.1" fill="#3f8f2a"/><rect x="84.5" y="54.1" width="1.3" height="1.4" fill="#d0ecb8"/><rect x="74.1" y="49.1" width="1.5" height="1.6" fill="#5fae3a"/><rect x="76.2" y="72.5" width="1.6" height="2.1" fill="#8ccc64"/><rect x="79.3" y="72.1" width="2.0" height="1.8" fill="#d0ecb8"/><rect x="84.3" y="69.1" width="1.2" height="1.1" fill="#d0ecb8"/><rect x="77.6" y="72.3" width="1.2" height="2.1" fill="#8ccc64"/><rect x="83.2" y="49.8" width="1.8" height="2.2" fill="#d0ecb8"/><rect x="82.4" y="49.0" width="1.4" height="2.2" fill="#8ccc64"/><rect x="84.2" y="54.0" width="1.7" height="2.3" fill="#d0ecb8"/><rect x="79.4" y="71.3" width="1.9" height="2.4" fill="#5fae3a"/><rect x="84.1" y="71.1" width="2.4" height="2.2" fill="#5fae3a"/><rect x="82.8" y="72.3" width="2.0" height="2.2" fill="#5fae3a"/><rect x="84.6" y="54.1" width="1.3" height="1.4" fill="#8ccc64"/><rect x="69.5" y="54.4" width="2.3" height="1.5" fill="#d0ecb8"/><rect x="69.3" y="50.5" width="1.1" height="2.3" fill="#3f8f2a"/><rect x="68.7" y="61.8" width="2.0" height="1.0" fill="#3f8f2a"/><rect x="75.2" y="49.2" width="1.3" height="1.9" fill="#d0ecb8"/><rect x="70.2" y="71.5" width="2.3" height="1.1" fill="#d0ecb8"/><rect x="68.9" y="60.6" width="1.4" height="1.8" fill="#3f8f2a"/><rect x="80.3" y="48.9" width="2.0" height="2.0" fill="#3f8f2a"/><rect x="69.3" y="70.6" width="2.0" height="1.8" fill="#5fae3a"/><rect x="76.3" y="71.1" width="1.4" height="2.1" fill="#8ccc64"/><rect x="83.6" y="69.0" width="2.0" height="1.2" fill="#8ccc64"/><rect x="78.5" y="49.5" width="1.6" height="1.5" fill="#8ccc64"/><rect x="75.9" y="72.2" width="2.1" height="1.2" fill="#8ccc64"/><rect x="70.2" y="50.8" width="12.6" height="19.6" fill="#fff"/>
<rect x="74.5" y="53" width="4" height="0.8" fill="#777"/><rect x="73.5" y="56" width="6" height="2.2" fill="#9a9a9a"/><rect x="74.5" y="59.5" width="4" height="1" fill="#aaa"/><rect x="72.0" y="67.5" width="9" height="0.8" fill="#888"/></svg>
<div class="a td" style="left:217px;top:564px">5</div>
<div class="a td" style="left:297px;top:564px">23436628</div>
<div class="a td" style="left:377px;top:564px"><span class="k" style="--tw:140.45px">2021-03-08 오전 8:15</span></div>
<div class="a td" style="left:526px;top:564px;font-size:14px"><span class="k" style="--tw:126.00px">거래명세서확인요청</span></div>
<div class="a td" style="left:662px;top:564px;font-size:14px"><span class="k" style="--tw:42.00px">리오더</span></div>
<div class="a td" style="left:742px;top:564px">2021-03-20</div>
<div class="a td" style="left:852px;top:564px;font-size:14px"><span class="k" style="--tw:35.80px">덕평1</span></div>
<div class="a td" style="left:930px;top:564px;font-size:14px"><span class="k" style="--tw:14.00px">이</span></div>
<svg class="a" style="left:22px;top:666px" width="13" height="13" viewBox="0 0 13 13"><rect x="0.5" y="0.5" width="12" height="12" fill="#fff" stroke="#333"/><path d="M2.5 6.5l3 3 5-6" fill="none" stroke="#333" stroke-width="1.2"/></svg>
<div class="a td" style="left:62px;top:664px">7</div>
<svg class="a" style="left:113px;top:623px" width="99" height="99" viewBox="0 0 99 99">
<defs><linearGradient id="colb1" x1="0" x2="1"><stop offset="0" stop-color="#8a8a8a"/><stop offset="0.15" stop-color="#1e1e1e"/><stop offset="0.3" stop-color="#555"/><stop offset="0.5" stop-color="#e8e8e8"/><stop offset="0.75" stop-color="#9a9a9a"/><stop offset="1" stop-color="#c8c8c8"/></linearGradient>
<linearGradient id="bulb1" x1="0" x2="1"><stop offset="0" stop-color="#e4e4e4"/><stop offset="0.5" stop-color="#fafafa"/><stop offset="1" stop-color="#dcdcdc"/></linearGradient></defs>
<rect x="23.5" y="26" width="9" height="52" rx="4" fill="#ececec" filter="url(#SHB)"/>
<rect x="19.0" y="22" width="7" height="12" rx="3.5" fill="url(#bulb1)"/>
<rect x="17.0" y="33" width="11" height="9" fill="url(#colb1)"/>
<rect x="16.0" y="41.5" width="13" height="1.8" fill="#a8a8a8"/>
<path d="M16.5 43.3L28.5 43.3Q31.5 45 31.5 49L31.5 73Q31.5 76.5 27.5 76.5L17.5 76.5Q13.5 76.5 13.5 73L13.5 49Q13.5 45 16.5 43.3Z" fill="#e9e9e9" stroke="#bdbdbd" stroke-width="0.7"/>
<rect x="14.2" y="48.5" width="16.6" height="24" fill="#d8e2d6"/><rect x="19.9" y="71.4" width="1.6" height="2.3" fill="#8fb878"/><rect x="22.3" y="71.4" width="2.2" height="1.5" fill="#e0e8e0"/><rect x="21.4" y="72.2" width="1.1" height="1.7" fill="#8fb878"/><rect x="29.7" y="50.8" width="1.2" height="2.2" fill="#8fb878"/><rect x="30.3" y="61.5" width="2.0" height="1.6" fill="#b9a6d8"/><rect x="30.6" y="66.9" width="1.8" height="1.3" fill="#b9a6d8"/><rect x="30.6" y="57.0" width="1.4" height="2.3" fill="#9cc6a0"/><rect x="29.4" y="71.6" width="1.8" height="1.9" fill="#9cc6a0"/><rect x="28.5" y="49.5" width="1.0" height="1.3" fill="#8fb878"/><rect x="15.4" y="63.7" width="1.7" height="1.8" fill="#9cc6a0"/><rect x="29.6" y="60.7" width="1.1" height="1.8" fill="#9cc6a0"/><rect x="15.0" y="70.6" width="2.3" height="1.2" fill="#8fb878"/><rect x="14.2" y="62.7" width="1.8" height="1.7" fill="#8fb878"/><rect x="19.4" y="49.8" width="2.0" height="1.2" fill="#c8b0e0"/><rect x="15.3" y="65.5" width="1.5" height="2.2" fill="#8fb878"/><rect x="30.0" y="65.9" width="1.7" height="1.2" fill="#8fb878"/><rect x="15.4" y="71.3" width="1.2" height="1.7" fill="#8fb878"/><rect x="17.5" y="71.7" width="1.0" height="1.7" fill="#9cc6a0"/><rect x="17.1" y="72.3" width="2.1" height="1.6" fill="#e0e8e0"/><rect x="22.7" y="71.9" width="1.3" height="1.0" fill="#b9a6d8"/><rect x="26.7" y="48.7" width="1.7" height="1.3" fill="#b9a6d8"/><rect x="14.5" y="57.8" width="1.3" height="1.0" fill="#8fb878"/><rect x="30.0" y="52.8" width="2.3" height="1.6" fill="#e0e8e0"/><rect x="14.7" y="72.1" width="1.4" height="1.1" fill="#9cc6a0"/><rect x="15.6" y="68.8" width="1.4" height="1.6" fill="#b9a6d8"/><rect x="29.8" y="51.2" width="2.4" height="1.9" fill="#e0e8e0"/><rect x="16.2" y="50.8" width="12.6" height="19.6" fill="#fff"/>
<rect x="20.5" y="53" width="4" height="0.8" fill="#777"/><rect x="19.5" y="56" width="6" height="2.2" fill="#9a9a9a"/><rect x="20.5" y="59.5" width="4" height="1" fill="#aaa"/><rect x="18.0" y="67.5" width="9" height="0.8" fill="#888"/>
<defs><linearGradient id="colb2" x1="0" x2="1"><stop offset="0" stop-color="#8a8a8a"/><stop offset="0.15" stop-color="#1e1e1e"/><stop offset="0.3" stop-color="#555"/><stop offset="0.5" stop-color="#e8e8e8"/><stop offset="0.75" stop-color="#9a9a9a"/><stop offset="1" stop-color="#c8c8c8"/></linearGradient>
<linearGradient id="bulb2" x1="0" x2="1"><stop offset="0" stop-color="#e4e4e4"/><stop offset="0.5" stop-color="#fafafa"/><stop offset="1" stop-color="#dcdcdc"/></linearGradient></defs>
<rect x="50.5" y="26" width="9" height="52" rx="4" fill="#ececec" filter="url(#SHB)"/>
<rect x="46.0" y="22" width="7" height="12" rx="3.5" fill="url(#bulb2)"/>
<rect x="44.0" y="33" width="11" height="9" fill="url(#colb2)"/>
<rect x="43.0" y="41.5" width="13" height="1.8" fill="#a8a8a8"/>
<path d="M43.5 43.3L55.5 43.3Q58.5 45 58.5 49L58.5 73Q58.5 76.5 54.5 76.5L44.5 76.5Q40.5 76.5 40.5 73L40.5 49Q40.5 45 43.5 43.3Z" fill="#e9e9e9" stroke="#bdbdbd" stroke-width="0.7"/>
<rect x="41.2" y="48.5" width="16.6" height="24" fill="#d8e2d6"/><rect x="56.9" y="49.9" width="2.2" height="2.4" fill="#9cc6a0"/><rect x="57.1" y="49.2" width="1.5" height="2.5" fill="#e0e8e0"/><rect x="41.3" y="58.5" width="1.1" height="1.9" fill="#8fb878"/><rect x="42.2" y="48.9" width="1.8" height="1.7" fill="#b9a6d8"/><rect x="44.4" y="50.0" width="1.7" height="2.2" fill="#e0e8e0"/><rect x="41.8" y="65.8" width="1.9" height="1.6" fill="#e0e8e0"/><rect x="57.6" y="51.1" width="1.6" height="1.5" fill="#9cc6a0"/><rect x="57.6" y="68.4" width="1.6" height="2.4" fill="#e0e8e0"/><rect x="56.8" y="58.0" width="1.3" height="2.2" fill="#9cc6a0"/><rect x="45.5" y="48.8" width="2.1" height="1.9" fill="#9cc6a0"/><rect x="41.9" y="71.3" width="2.1" height="2.2" fill="#8fb878"/><rect x="41.7" y="62.3" width="2.2" height="1.1" fill="#c8b0e0"/><rect x="41.9" y="69.1" width="2.1" height="1.5" fill="#e0e8e0"/><rect x="41.3" y="57.7" width="2.4" height="1.2" fill="#c8b0e0"/><rect x="43.0" y="48.6" width="2.0" height="1.4" fill="#8fb878"/><rect x="57.7" y="51.8" width="2.5" height="1.2" fill="#e0e8e0"/><rect x="56.6" y="61.4" width="1.6" height="2.2" fill="#c8b0e0"/><rect x="53.8" y="49.3" width="1.3" height="1.3" fill="#8fb878"/><rect x="42.4" y="51.1" width="1.0" height="2.4" fill="#b9a6d8"/><rect x="42.6" y="49.2" width="1.3" height="2.2" fill="#c8b0e0"/><rect x="42.2" y="66.0" width="2.3" height="1.5" fill="#c8b0e0"/><rect x="53.6" y="71.4" width="2.4" height="1.7" fill="#9cc6a0"/><rect x="56.5" y="48.7" width="1.4" height="2.0" fill="#e0e8e0"/><rect x="44.3" y="49.6" width="2.4" height="2.0" fill="#e0e8e0"/><rect x="53.7" y="71.1" width="1.8" height="1.4" fill="#8fb878"/><rect x="45.0" y="49.2" width="1.4" height="1.5" fill="#b9a6d8"/><rect x="43.2" y="50.8" width="12.6" height="19.6" fill="#fff"/>
<rect x="47.5" y="53" width="4" height="0.8" fill="#777"/><rect x="46.5" y="56" width="6" height="2.2" fill="#9a9a9a"/><rect x="47.5" y="59.5" width="4" height="1" fill="#aaa"/><rect x="45.0" y="67.5" width="9" height="0.8" fill="#888"/>
<defs><linearGradient id="colb3" x1="0" x2="1"><stop offset="0" stop-color="#8a8a8a"/><stop offset="0.15" stop-color="#1e1e1e"/><stop offset="0.3" stop-color="#555"/><stop offset="0.5" stop-color="#e8e8e8"/><stop offset="0.75" stop-color="#9a9a9a"/><stop offset="1" stop-color="#c8c8c8"/></linearGradient>
<linearGradient id="bulb3" x1="0" x2="1"><stop offset="0" stop-color="#e4e4e4"/><stop offset="0.5" stop-color="#fafafa"/><stop offset="1" stop-color="#dcdcdc"/></linearGradient></defs>
<rect x="77.5" y="26" width="9" height="52" rx="4" fill="#ececec" filter="url(#SHB)"/>
<rect x="73.0" y="22" width="7" height="12" rx="3.5" fill="url(#bulb3)"/>
<rect x="71.0" y="33" width="11" height="9" fill="url(#colb3)"/>
<rect x="70.0" y="41.5" width="13" height="1.8" fill="#a8a8a8"/>
<path d="M70.5 43.3L82.5 43.3Q85.5 45 85.5 49L85.5 73Q85.5 76.5 81.5 76.5L71.5 76.5Q67.5 76.5 67.5 73L67.5 49Q67.5 45 70.5 43.3Z" fill="#e9e9e9" stroke="#bdbdbd" stroke-width="0.7"/>
<rect x="68.2" y="48.5" width="16.6" height="24" fill="#d8e2d6"/><rect x="84.6" y="71.2" width="1.9" height="2.4" fill="#c8b0e0"/><rect x="74.1" y="71.3" width="1.9" height="1.6" fill="#9cc6a0"/><rect x="84.2" y="72.4" width="1.4" height="2.4" fill="#b9a6d8"/><rect x="68.2" y="52.0" width="1.8" height="1.1" fill="#9cc6a0"/><rect x="68.5" y="53.3" width="1.7" height="1.1" fill="#9cc6a0"/><rect x="84.4" y="55.1" width="1.2" height="1.4" fill="#9cc6a0"/><rect x="69.4" y="71.2" width="2.1" height="2.1" fill="#9cc6a0"/><rect x="83.3" y="49.1" width="2.4" height="1.7" fill="#c8b0e0"/><rect x="83.8" y="68.1" width="1.4" height="1.7" fill="#e0e8e0"/><rect x="80.2" y="49.9" width="1.8" height="1.0" fill="#c8b0e0"/><rect x="84.1" y="52.3" width="1.1" height="1.3" fill="#9cc6a0"/><rect x="83.9" y="49.7" width="2.5" height="1.1" fill="#b9a6d8"/><rect x="83.3" y="58.4" width="1.5" height="1.1" fill="#c8b0e0"/><rect x="68.9" y="54.5" width="2.0" height="1.7" fill="#e0e8e0"/><rect x="68.9" y="49.1" width="1.9" height="2.0" fill="#c8b0e0"/><rect x="84.7" y="65.6" width="2.3" height="1.6" fill="#e0e8e0"/><rect x="83.7" y="52.4" width="1.0" height="2.0" fill="#9cc6a0"/><rect x="76.5" y="72.1" width="2.3" height="2.5" fill="#c8b0e0"/><rect x="74.1" y="71.9" width="1.4" height="1.1" fill="#b9a6d8"/><rect x="68.8" y="56.6" width="1.7" height="2.2" fill="#9cc6a0"/><rect x="83.5" y="48.7" width="1.5" height="1.8" fill="#9cc6a0"/><rect x="81.8" y="72.2" width="2.4" height="1.9" fill="#8fb878"/><rect x="77.4" y="49.3" width="1.7" height="1.4" fill="#e0e8e0"/><rect x="68.9" y="50.2" width="1.1" height="1.7" fill="#9cc6a0"/><rect x="83.8" y="56.5" width="2.0" height="2.4" fill="#9cc6a0"/><rect x="69.0" y="48.8" width="1.1" height="1.5" fill="#c8b0e0"/><rect x="70.2" y="50.8" width="12.6" height="19.6" fill="#fff"/>
<rect x="74.5" y="53" width="4" height="0.8" fill="#777"/><rect x="73.5" y="56" width="6" height="2.2" fill="#9a9a9a"/><rect x="74.5" y="59.5" width="4" height="1" fill="#aaa"/><rect x="72.0" y="67.5" width="9" height="0.8" fill="#888"/></svg>
<div class="a td" style="left:217px;top:664px">5</div>
<div class="a td" style="left:297px;top:664px">23436628</div>
<div class="a td" style="left:377px;top:664px"><span class="k" style="--tw:140.45px">2021-03-08 오전 8:15</span></div>
<div class="a td" style="left:526px;top:664px;font-size:14px"><span class="k" style="--tw:126.00px">거래명세서확인요청</span></div>
<div class="a td" style="left:662px;top:664px;font-size:14px"><span class="k" style="--tw:42.00px">리오더</span></div>
<div class="a td" style="left:742px;top:664px">2021-03-20</div>
<div class="a td" style="left:852px;top:664px;font-size:14px"><span class="k" style="--tw:35.80px">덕평1</span></div>
<div class="a td" style="left:930px;top:664px;font-size:14px"><span class="k" style="--tw:14.00px">이</span></div>
<svg class="a" style="left:22px;top:766px" width="13" height="13" viewBox="0 0 13 13"><rect x="0.5" y="0.5" width="12" height="12" fill="#fff" stroke="#333"/><path d="M2.5 6.5l3 3 5-6" fill="none" stroke="#333" stroke-width="1.2"/></svg>
<div class="a td" style="left:62px;top:764px">8</div>
<svg class="a" style="left:113px;top:723px" width="99" height="99" viewBox="0 0 99 99">
<defs><linearGradient id="colc1" x1="0" x2="1"><stop offset="0" stop-color="#8a8a8a"/><stop offset="0.15" stop-color="#1e1e1e"/><stop offset="0.3" stop-color="#555"/><stop offset="0.5" stop-color="#e8e8e8"/><stop offset="0.75" stop-color="#9a9a9a"/><stop offset="1" stop-color="#c8c8c8"/></linearGradient>
<linearGradient id="bulc1" x1="0" x2="1"><stop offset="0" stop-color="#e4e4e4"/><stop offset="0.5" stop-color="#fafafa"/><stop offset="1" stop-color="#dcdcdc"/></linearGradient></defs>
<rect x="23.5" y="26" width="9" height="52" rx="4" fill="#ececec" filter="url(#SHB)"/>
<rect x="19.0" y="22" width="7" height="12" rx="3.5" fill="url(#bulc1)"/>
<rect x="17.0" y="33" width="11" height="9" fill="url(#colc1)"/>
<rect x="16.0" y="41.5" width="13" height="1.8" fill="#a8a8a8"/>
<path d="M16.5 43.3L28.5 43.3Q31.5 45 31.5 49L31.5 73Q31.5 76.5 27.5 76.5L17.5 76.5Q13.5 76.5 13.5 73L13.5 49Q13.5 45 16.5 43.3Z" fill="#e9e9e9" stroke="#bdbdbd" stroke-width="0.7"/>
<rect x="14.2" y="48.5" width="16.6" height="24" fill="#d89090"/><rect x="23.1" y="71.1" width="1.6" height="1.6" fill="#c04848"/><rect x="17.9" y="71.3" width="1.1" height="1.8" fill="#c04848"/><rect x="15.6" y="70.9" width="2.0" height="1.6" fill="#701818"/><rect x="18.5" y="71.8" width="1.1" height="1.4" fill="#3f8f2a"/><rect x="29.5" y="64.7" width="2.0" height="1.7" fill="#701818"/><rect x="14.4" y="49.8" width="2.1" height="1.3" fill="#3f8f2a"/><rect x="30.6" y="49.6" width="2.4" height="1.8" fill="#701818"/><rect x="14.8" y="52.7" width="1.0" height="1.2" fill="#c04848"/><rect x="29.7" y="57.3" width="2.4" height="1.9" fill="#3f8f2a"/><rect x="15.6" y="71.4" width="2.5" height="1.4" fill="#e6b0b0"/><rect x="15.9" y="72.3" width="1.7" height="2.1" fill="#701818"/><rect x="21.6" y="71.8" width="1.7" height="1.8" fill="#701818"/><rect x="30.4" y="55.3" width="2.1" height="2.1" fill="#e6b0b0"/><rect x="29.8" y="67.8" width="1.2" height="1.9" fill="#c04848"/><rect x="24.0" y="71.3" width="1.9" height="1.2" fill="#c04848"/><rect x="30.1" y="72.0" width="1.8" height="2.1" fill="#c04848"/><rect x="22.8" y="71.7" width="1.2" height="1.9" fill="#e6b0b0"/><rect x="22.3" y="71.6" width="1.5" height="1.5" fill="#e6b0b0"/><rect x="18.8" y="50.0" width="1.4" height="1.2" fill="#3f8f2a"/><rect x="25.9" y="48.9" width="1.7" height="1.4" fill="#3f8f2a"/><rect x="19.6" y="72.2" width="1.3" height="1.9" fill="#701818"/><rect x="14.3" y="58.3" width="2.3" height="2.2" fill="#c04848"/><rect x="30.6" y="57.3" width="2.5" height="1.5" fill="#3f8f2a"/><rect x="15.0" y="68.8" width="1.6" height="2.3" fill="#e6b0b0"/><rect x="14.7" y="60.1" width="1.6" height="1.6" fill="#c04848"/><rect x="16.5" y="71.3" width="1.6" height="1.9" fill="#3f8f2a"/><rect x="16.2" y="50.8" width="12.6" height="19.6" fill="#fff"/>
<rect x="20.5" y="53" width="4" height="0.8" fill="#777"/><rect x="19.5" y="56" width="6" height="2.2" fill="#9a9a9a"/><rect x="20.5" y="59.5" width="4" height="1" fill="#aaa"/><rect x="18.0" y="67.5" width="9" height="0.8" fill="#888"/>
<defs><linearGradient id="colc2" x1="0" x2="1"><stop offset="0" stop-color="#8a8a8a"/><stop offset="0.15" stop-color="#1e1e1e"/><stop offset="0.3" stop-color="#555"/><stop offset="0.5" stop-color="#e8e8e8"/><stop offset="0.75" stop-color="#9a9a9a"/><stop offset="1" stop-color="#c8c8c8"/></linearGradient>
<linearGradient id="bulc2" x1="0" x2="1"><stop offset="0" stop-color="#e4e4e4"/><stop offset="0.5" stop-color="#fafafa"/><stop offset="1" stop-color="#dcdcdc"/></linearGradient></defs>
<rect x="50.5" y="26" width="9" height="52" rx="4" fill="#ececec" filter="url(#SHB)"/>
<rect x="46.0" y="22" width="7" height="12" rx="3.5" fill="url(#bulc2)"/>
<rect x="44.0" y="33" width="11" height="9" fill="url(#colc2)"/>
<rect x="43.0" y="41.5" width="13" height="1.8" fill="#a8a8a8"/>
<path d="M43.5 43.3L55.5 43.3Q58.5 45 58.5 49L58.5 73Q58.5 76.5 54.5 76.5L44.5 76.5Q40.5 76.5 40.5 73L40.5 49Q40.5 45 43.5 43.3Z" fill="#e9e9e9" stroke="#bdbdbd" stroke-width="0.7"/>
<rect x="41.2" y="48.5" width="16.6" height="24" fill="#d89090"/><rect x="41.5" y="58.5" width="1.3" height="1.0" fill="#e6b0b0"/><rect x="53.0" y="72.2" width="2.3" height="2.4" fill="#701818"/><rect x="52.1" y="48.7" width="2.3" height="1.6" fill="#701818"/><rect x="57.6" y="55.1" width="1.3" height="2.2" fill="#c04848"/><rect x="41.6" y="71.5" width="1.0" height="2.2" fill="#3f8f2a"/><rect x="45.6" y="71.6" width="1.8" height="1.6" fill="#e6b0b0"/><rect x="45.8" y="72.0" width="2.1" height="2.3" fill="#c04848"/><rect x="55.2" y="72.1" width="1.5" height="2.3" fill="#e6b0b0"/><rect x="55.8" y="71.9" width="1.1" height="2.0" fill="#701818"/><rect x="57.6" y="53.1" width="1.6" height="1.1" fill="#c04848"/><rect x="57.2" y="50.5" width="1.3" height="1.7" fill="#701818"/><rect x="46.7" y="49.2" width="2.4" height="1.3" fill="#e6b0b0"/><rect x="55.6" y="48.7" width="1.8" height="1.9" fill="#e6b0b0"/><rect x="53.5" y="49.9" width="2.3" height="2.1" fill="#3f8f2a"/><rect x="42.2" y="71.6" width="1.5" height="1.3" fill="#3f8f2a"/><rect x="57.5" y="70.1" width="1.2" height="2.4" fill="#701818"/><rect x="56.8" y="65.9" width="1.5" height="1.4" fill="#c04848"/><rect x="56.9" y="57.5" width="1.3" height="1.4" fill="#e6b0b0"/><rect x="42.2" y="56.3" width="1.2" height="1.3" fill="#701818"/><rect x="57.1" y="54.1" width="2.0" height="1.3" fill="#e6b0b0"/><rect x="56.6" y="65.8" width="1.6" height="1.8" fill="#3f8f2a"/><rect x="48.3" y="48.6" width="2.2" height="2.3" fill="#701818"/><rect x="42.1" y="54.7" width="2.3" height="2.0" fill="#3f8f2a"/><rect x="54.3" y="72.5" width="1.5" height="2.5" fill="#701818"/><rect x="56.5" y="58.1" width="2.3" height="1.2" fill="#e6b0b0"/><rect x="41.7" y="51.9" width="1.4" height="1.9" fill="#3f8f2a"/><rect x="43.2" y="50.8" width="12.6" height="19.6" fill="#fff"/>
<rect x="47.5" y="53" width="4" height="0.8" fill="#777"/><rect x="46.5" y="56" width="6" height="2.2" fill="#9a9a9a"/><rect x="47.5" y="59.5" width="4" height="1" fill="#aaa"/><rect x="45.0" y="67.5" width="9" height="0.8" fill="#888"/>
<defs><linearGradient id="colc3" x1="0" x2="1"><stop offset="0" stop-color="#8a8a8a"/><stop offset="0.15" stop-color="#1e1e1e"/><stop offset="0.3" stop-color="#555"/><stop offset="0.5" stop-color="#e8e8e8"/><stop offset="0.75" stop-color="#9a9a9a"/><stop offset="1" stop-color="#c8c8c8"/></linearGradient>
<linearGradient id="bulc3" x1="0" x2="1"><stop offset="0" stop-color="#e4e4e4"/><stop offset="0.5" stop-color="#fafafa"/><stop offset="1" stop-color="#dcdcdc"/></linearGradient></defs>
<rect x="77.5" y="26" width="9" height="52" rx="4" fill="#ececec" filter="url(#SHB)"/>
<rect x="73.0" y="22" width="7" height="12" rx="3.5" fill="url(#bulc3)"/>
<rect x="71.0" y="33" width="11" height="9" fill="url(#colc3)"/>
<rect x="70.0" y="41.5" width="13" height="1.8" fill="#a8a8a8"/>
<path d="M70.5 43.3L82.5 43.3Q85.5 45 85.5 49L85.5 73Q85.5 76.5 81.5 76.5L71.5 76.5Q67.5 76.5 67.5 73L67.5 49Q67.5 45 70.5 43.3Z" fill="#e9e9e9" stroke="#bdbdbd" stroke-width="0.7"/>
<rect x="68.2" y="48.5" width="16.6" height="24" fill="#d89090"/><rect x="74.2" y="71.1" width="1.5" height="2.0" fill="#c04848"/><rect x="77.5" y="49.5" width="1.4" height="1.5" fill="#701818"/><rect x="83.0" y="49.1" width="1.8" height="2.1" fill="#701818"/><rect x="74.1" y="71.3" width="1.4" height="1.3" fill="#701818"/><rect x="68.7" y="52.2" width="2.4" height="1.7" fill="#701818"/><rect x="71.3" y="71.6" width="1.9" height="1.2" fill="#c04848"/><rect x="79.4" y="71.2" width="2.0" height="1.2" fill="#c04848"/><rect x="82.1" y="71.8" width="1.6" height="1.1" fill="#e6b0b0"/><rect x="71.9" y="48.9" width="1.3" height="1.2" fill="#e6b0b0"/><rect x="70.6" y="71.6" width="2.0" height="1.4" fill="#3f8f2a"/><rect x="83.7" y="54.4" width="1.5" height="1.5" fill="#c04848"/><rect x="69.5" y="51.6" width="1.1" height="2.5" fill="#e6b0b0"/><rect x="68.7" y="66.0" width="1.2" height="2.0" fill="#e6b0b0"/><rect x="83.9" y="68.5" width="2.1" height="1.8" fill="#701818"/><rect x="72.3" y="71.8" width="1.9" height="1.6" fill="#c04848"/><rect x="68.5" y="63.2" width="1.3" height="2.1" fill="#3f8f2a"/><rect x="72.3" y="49.4" width="1.8" height="2.4" fill="#e6b0b0"/><rect x="83.5" y="53.5" width="2.4" height="1.1" fill="#701818"/><rect x="70.6" y="49.3" width="2.0" height="1.9" fill="#3f8f2a"/><rect x="70.4" y="49.4" width="2.3" height="1.2" fill="#c04848"/><rect x="69.1" y="60.4" width="2.1" height="1.8" fill="#701818"/><rect x="71.0" y="49.7" width="1.1" height="2.0" fill="#701818"/><rect x="83.3" y="56.2" width="2.1" height="2.3" fill="#e6b0b0"/><rect x="68.3" y="53.4" width="1.0" height="1.8" fill="#e6b0b0"/><rect x="84.0" y="53.9" width="1.0" height="1.3" fill="#3f8f2a"/><rect x="74.5" y="71.6" width="2.5" height="1.2" fill="#3f8f2a"/><rect x="70.2" y="50.8" width="12.6" height="19.6" fill="#fff"/>
<rect x="74.5" y="53" width="4" height="0.8" fill="#777"/><rect x="73.5" y="56" width="6" height="2.2" fill="#9a9a9a"/><rect x="74.5" y="59.5" width="4" height="1" fill="#aaa"/><rect x="72.0" y="67.5" width="9" height="0.8" fill="#888"/></svg>
<div class="a td" style="left:217px;top:764px">5</div>
<div class="a td" style="left:297px;top:764px">23436628</div>
<div class="a td" style="left:377px;top:764px"><span class="k" style="--tw:140.45px">2021-03-08 오전 8:15</span></div>
<div class="a td" style="left:526px;top:764px;font-size:14px"><span class="k" style="--tw:126.00px">거래명세서확인요청</span></div>
<div class="a td" style="left:662px;top:764px;font-size:14px"><span class="k" style="--tw:42.00px">리오더</span></div>
<div class="a td" style="left:742px;top:764px">2021-03-20</div>
<div class="a td" style="left:852px;top:764px;font-size:14px"><span class="k" style="--tw:35.80px">덕평1</span></div>
<div class="a td" style="left:930px;top:764px;font-size:14px"><span class="k" style="--tw:14.00px">이</span></div>
</div>
<div class="a" style="left:1107px;top:169px;width:16px;height:775px;background:#f0f0f0"></div>
<div class="a" style="left:1107px;top:186px;width:15px;height:17px;background:#cdcdcd"></div>
<svg class="a" style="left:1110px;top:175px" width="10" height="7" viewBox="0 0 10 7"><path d="M1.5 5L5 1.5L8.5 5" fill="none" stroke="#505050" stroke-width="2.2"/></svg>
<svg class="a" style="left:1109.5px;top:931px" width="10" height="7" viewBox="0 0 10 7"><path d="M1.5 1.5L5 5L8.5 1.5" fill="none" stroke="#505050" stroke-width="2.2"/></svg>
<div class="a" style="left:165px;top:944px;width:958px;height:16px;background:#f0f0f0"></div>
<div class="a" style="left:182px;top:944px;width:515px;height:15px;background:#cdcdcd"></div>
<svg class="a" style="left:170px;top:947px" width="7" height="10" viewBox="0 0 7 10"><path d="M5 1.5L1.5 5L5 8.5" fill="none" stroke="#505050" stroke-width="2.2"/></svg>
<svg class="a" style="left:1094.5px;top:946.5px" width="7" height="10" viewBox="0 0 7 10"><path d="M1.5 1.5L5 5L1.5 8.5" fill="none" stroke="#505050" stroke-width="2.2"/></svg>
</div>

<!-- RIGHT PANEL -->
<div id="rpanel">
<div class="a" style="left:1137px;top:38px;width:377px;height:1px;background:#d9d9d9"></div>
<div class="a gb" style="left:1140px;top:55px;width:372px;height:130px"></div>
<svg class="a" style="left:1143px;top:85px" width="366" height="76" viewBox="0 0 366 76">
<rect x="0" y="0" width="366" height="76" fill="#f4f8f8"/>
<rect x="0" y="1" width="366" height="75" fill="#ff6a40"/>
<g fill="#e24a2c">
<path d="M0 10L40 31L0 17Z"/><path d="M0 61L35 52L0 69Z"/><path d="M332 39L366 20L366 28Z"/><path d="M322 62L366 69L366 76Z"/>
</g>
<g fill="none" stroke-linecap="round">
<path d="M13 1L33 16" stroke="#ffb41e" stroke-width="1.2"/><path d="M32 1L41 11" stroke="#ffd6c8" stroke-width="1"/>
<path d="M0 31L18 37" stroke="#ffe0d6" stroke-width="1.5"/><path d="M12 75L31 65" stroke="#ffd6c8" stroke-width="1.2"/><path d="M37 75L46 72" stroke="#ffb41e" stroke-width="1"/>
<path d="M323 23L357 1" stroke="#ffb41e" stroke-width="1.5"/><path d="M319 13L333 1" stroke="#ffc8b4" stroke-width="1"/><path d="M338 27L366 10" stroke="#ffd6c8" stroke-width="1.2"/>
<path d="M339 59L366 64" stroke="#ffe6de" stroke-width="2.2"/>
</g>
<path d="M41 14L49 18L42 20Z" fill="#fff"/><path d="M44 30L52 35L45 38Z" fill="#76e2c0"/><path d="M26 45L33 47L28 49Z" fill="#fff"/><path d="M50 60L56 63L51 65Z" fill="#ffe020"/>
<path d="M310 23L317 25L312 30Z" fill="#ffee00"/><path d="M324 36L330 37L327 41Z" fill="#fff"/><path d="M331 51L334 53L331 54Z" fill="#ffee00"/><path d="M312 54L317 56.5L312 59Z" fill="#76e2c0"/>
<text x="116" y="21" textLength="136" lengthAdjust="spacingAndGlyphs" font-family="Liberation Sans, sans-serif" font-size="13" font-weight="bold" fill="#80e4be">마케팅 <tspan fill="#ffe2d6" font-weight="normal">또는</tspan> 웹 데이터 수집 <tspan fill="#ffe2d6" font-weight="normal">등</tspan></text>
<text x="135" y="35" textLength="99" lengthAdjust="spacingAndGlyphs" font-family="Liberation Sans, sans-serif" font-size="13" font-weight="bold" fill="#80e4be">프로그램 문의<tspan fill="#ffe2d6" font-weight="normal">하세요!</tspan></text>
<text x="81" y="48.5" textLength="208" lengthAdjust="spacingAndGlyphs" font-family="Liberation Sans, sans-serif" font-size="9" font-weight="bold" fill="#111">vb6.0 및 vba(엑셀)+vb.net <tspan font-weight="normal" fill="#2a0c06">프로그램 저렴하게 제작해드립니다.</tspan></text>
<rect x="144" y="55" width="76" height="14" rx="7" fill="#0c0806"/>
<text x="153" y="65.5" textLength="61" lengthAdjust="spacingAndGlyphs" font-family="Liberation Sans, sans-serif" font-size="8.5" fill="#fff">문의 - <tspan fill="#f2d83a">카톡 : vbnvba</tspan></text>
</svg>
<div class="a" style="left:1140px;top:186px;width:372px;height:784px;background:#fff;border:1px solid #828790"></div>
<div class="a" style="left:1142px;top:920px;width:368px;height:12px;background:#0078d7"></div>
<div class="a" style="left:1144px;top:205px;display:inline-block;width:29px;height:1px;background:repeating-linear-gradient(90deg,#000 0 4px,transparent 4px 5.8px)"></div><div class="a log" style="left:1179px;top:200px;color:#000"><span class="k" style="--tw:78.50px">도움 주신 분들</span></div><div class="a" style="left:1264px;top:205px;display:inline-block;width:29px;height:1px;background:repeating-linear-gradient(90deg,#000 0 4px,transparent 4px 5.8px)"></div>
<div class="a log" style="left:1144px;top:212px;color:#000"><span class="k" style="--tw:146.00px">2019.10.01 홀투그린 - 제안</span></div>
<div class="a log" style="left:1144px;top:224px;color:#000"><span class="k" style="--tw:123.00px">2019.11.01 무료배포 v1</span></div>
<div class="a log" style="left:1144px;top:236px;color:#000"><span class="k" style="--tw:163.00px">2019.12.03 일부 기능 업데이트</span></div>
<div class="a log" style="left:1144px;top:260px;color:#000"><span class="k" style="--tw:202.00px">2020.03.06 '(주)성은' - 오류 수정요청</span></div>
<div class="a log" style="left:1144px;top:284px;color:#000"><span class="k" style="--tw:263.00px">2020.03.06 일부 기능 업데이트 및 검색 기능 추가</span></div>
<div class="a log" style="left:1204px;top:296px;color:#000"><span class="k" style="--tw:191.00px">- 항목 순서 변경(엑셀 변환 미적용)</span></div>
<div class="a log" style="left:1144px;top:320px;color:#000"><span class="k" style="--tw:155.00px">2020.03.07 기능 추가 및 개선</span></div>
<div class="a log" style="left:1176px;top:332px;color:#000"><span class="k" style="--tw:173.00px">1. 항목 순서와 똑같이 엑셀 변환</span></div>
<div class="a log" style="left:1176px;top:344px;color:#000"><span class="k" style="--tw:270.00px">2. 이전 데이터 저장 및 불러들임(종료 시, 시작 시)</span></div>
<div class="a log" style="left:1176px;top:356px;color:#000"><span class="k" style="--tw:120.00px">3. 항목 순서 변경 개선</span></div>
<div class="a log" style="left:1176px;top:368px;color:#000"><span class="k" style="--tw:111.00px">4. 보기/안 보기 추가</span></div>
<div class="a log" style="left:1176px;top:380px;color:#000"><span class="k" style="--tw:93.00px">5. 엑셀 변환 개선</span></div>
<div class="a log" style="left:1176px;top:392px;color:#000"><span class="k" style="--tw:248.00px">6. 상세 리스트 크롤링에서 엑셀 파싱으로 변경</span></div>
<div class="a log" style="left:1176px;top:404px;color:#000"><span class="k" style="--tw:142.00px">7. 리스트내 날짜검색 추가</span></div>
<div class="a log" style="left:1144px;top:428px;color:#000"><span class="k" style="--tw:155.00px">2020.05.20 기능 추가 및 개선</span></div>
<div class="a log" style="left:1176px;top:440px;color:#000"><span class="k" style="--tw:172.00px">1. 기존 웹크롤링 방식 오류 개선</span></div>
<div class="a log" style="left:1176px;top:452px;color:#000"><span class="k" style="--tw:156.00px">2. 정산 페이지 가져오기 추가</span></div>
<div class="a log" style="left:1144px;top:476px;color:#000"><span class="k" style="--tw:155.00px">2020.05.25 기능 추가 및 개선</span></div>
<div class="a log" style="left:1176px;top:488px;color:#000"><span class="k" style="--tw:154.00px">1. 정산페이지 검색기능 추가</span></div>
<div class="a log" style="left:1188px;top:500px;color:#000"><span class="k" style="--tw:108.00px">- 추가의견 반영예정</span></div>
<div class="a log" style="left:1144px;top:524px;color:#000"><span class="k" style="--tw:314.00px">2020.07.24 위어스(WEUS) 백** 대표님 오류 수정요청 반영</span></div>
<div class="a log" style="left:1176px;top:536px;color:#000"><span class="k" style="--tw:180.00px">1. 항목 순서 적용 안 될 현상 수정</span></div>
<div class="a log" style="left:1144px;top:560px;color:#000"><span class="k" style="--tw:314.00px">2020.08.11 위어스(WEUS) 백** 대표님 오류 수정요청 반영</span></div>
<div class="a log" style="left:1176px;top:572px;color:#000"><span class="k" style="--tw:164.00px">1. 설정값 저장 안 될 현상 수정</span></div>
<div class="a log" style="left:1176px;top:584px;color:#000"><span class="k" style="--tw:200.00px">2. 기타 설정관련 INI Class 다수 수정</span></div>
<div class="a log" style="left:1144px;top:608px;color:#000"><span class="k" style="--tw:190.00px">2020.10.03 디자인 및 레이아웃 변경</span></div>
<div class="a log" style="left:1176px;top:620px;color:#000"><span class="k" style="--tw:77.00px">1. 디자인 수정</span></div>
<div class="a log" style="left:1176px;top:632px;color:#000"><span class="k" style="--tw:114.00px">2. 엑셀변환 기능추가</span></div>
<div class="a log" style="left:1144px;top:656px;color:#000"><span class="k" style="--tw:164.00px">2021.05.30 바코드 프린트 추가</span></div>
<div class="a log" style="left:1176px;top:668px;color:#000"><span class="k" style="--tw:164.00px">1. 60mm x 30mm 바코드 추가</span></div>
<div class="a log" style="left:1176px;top:680px;color:#000"><span class="k" style="--tw:112.00px">2. 엑셀변환 기능수정</span></div>
<div class="a log" style="left:1176px;top:692px;color:#000"><span class="k" style="--tw:170.00px">3. 상세리스트 이미지 보기 추가</span></div>
<div class="a log" style="left:1188px;top:704px;color:#000"><span class="k" style="--tw:256.00px">- 이미지 내문서 경로에 저장하여 로딩속도 개선</span></div>
<div class="a" style="left:1144px;top:757px;display:inline-block;width:29px;height:1px;background:repeating-linear-gradient(90deg,#000 0 4px,transparent 4px 5.8px)"></div><div class="a log" style="left:1178px;top:752px;color:#000"><span class="k" style="--tw:75.60px">프로그램 시작</span></div><div class="a" style="left:1259px;top:757px;display:inline-block;width:29px;height:1px;background:repeating-linear-gradient(90deg,#000 0 4px,transparent 4px 5.8px)"></div>
<div class="a log" style="left:1144px;top:776px;color:#000"><span class="k" style="--tw:46.00px">로딩중...</span></div>
<div class="a log" style="left:1144px;top:812px;color:#000"><span class="k" style="--tw:62.00px">로그인 성공</span></div>
<div class="a log" style="left:1144px;top:836px;color:#000"><span class="k" style="--tw:142.00px">설정을 불러오고 있습니다.</span></div>
<div class="a log" style="left:1144px;top:860px;color:#000"><span class="k" style="--tw:169.00px">리스트를 보기 좋게 정리합니다.</span></div>
<div class="a log" style="left:1144px;top:884px;color:#000"><span class="k" style="--tw:114.00px">이미지를 불러옵니다.</span></div>
<div class="a log" style="left:1144px;top:896px;color:#000"><span class="k" style="--tw:315.00px">기간 2021.04.28 ~ 2021.07.19 : 지급예정금액: 16,928,846원</span></div>
<div class="a log" style="left:1144px;top:920px;color:#fff"><span class="k" style="--tw:142.00px">이제 사용하셔도 좋습니다.</span></div>
</div>

<!-- DIALOG -->
<div id="dialog">
<div class="a" style="left:693px;top:494px;width:197px;height:133px;border:1px solid #1a82d9;background:#fff"></div>
<div class="a" style="left:694px;top:495px;width:195px;height:30px;background:#0078d7"></div>
<div class="a" style="left:702px;top:502px;color:#fff;font-size:12.5px;white-space:nowrap">supplier.coupang.com</div>
<svg class="a" style="left:868px;top:504px" width="11" height="11" viewBox="0 0 11 11"><path d="M0.5 0.5L10.5 10.5M10.5 0.5L0.5 10.5" stroke="#fff" stroke-width="1.1"/></svg>
<div class="a dlgt" style="left:706px;top:546px"><span class="k" style="--tw:153.00px">바코드 출력이 완료되었습니다.</span></div>
<div class="a" style="left:694px;top:584px;width:195px;height:42px;background:#f0f0f0"></div>
<div class="a" style="left:800px;top:594px;width:73px;height:22px;border:2px solid #0078d7;background:#e1e1e1"></div>
<div class="a" style="left:803px;top:597px;width:67px;height:16px;border:1px dotted #000"></div>
<div class="a dlgt" style="left:800px;top:597px;width:74px;text-align:center"><span class="k" style="--tw:24.00px">확인</span></div>
</div>
<script>
(function(){
  var els = document.querySelectorAll('span.k');
  for (var i = 0; i < els.length; i++) {
    var e = els[i];
    var tw = parseFloat(e.style.getPropertyValue('--tw'));
    var w = e.getBoundingClientRect().width;
    if (tw > 0 && w > 0) {
      var r = tw / w;
      if (Math.abs(r - 1) > 0.015) e.style.transform = 'scaleX(' + r.toFixed(4) + ')';
    }
  }
})();
</script>
</body></html>
